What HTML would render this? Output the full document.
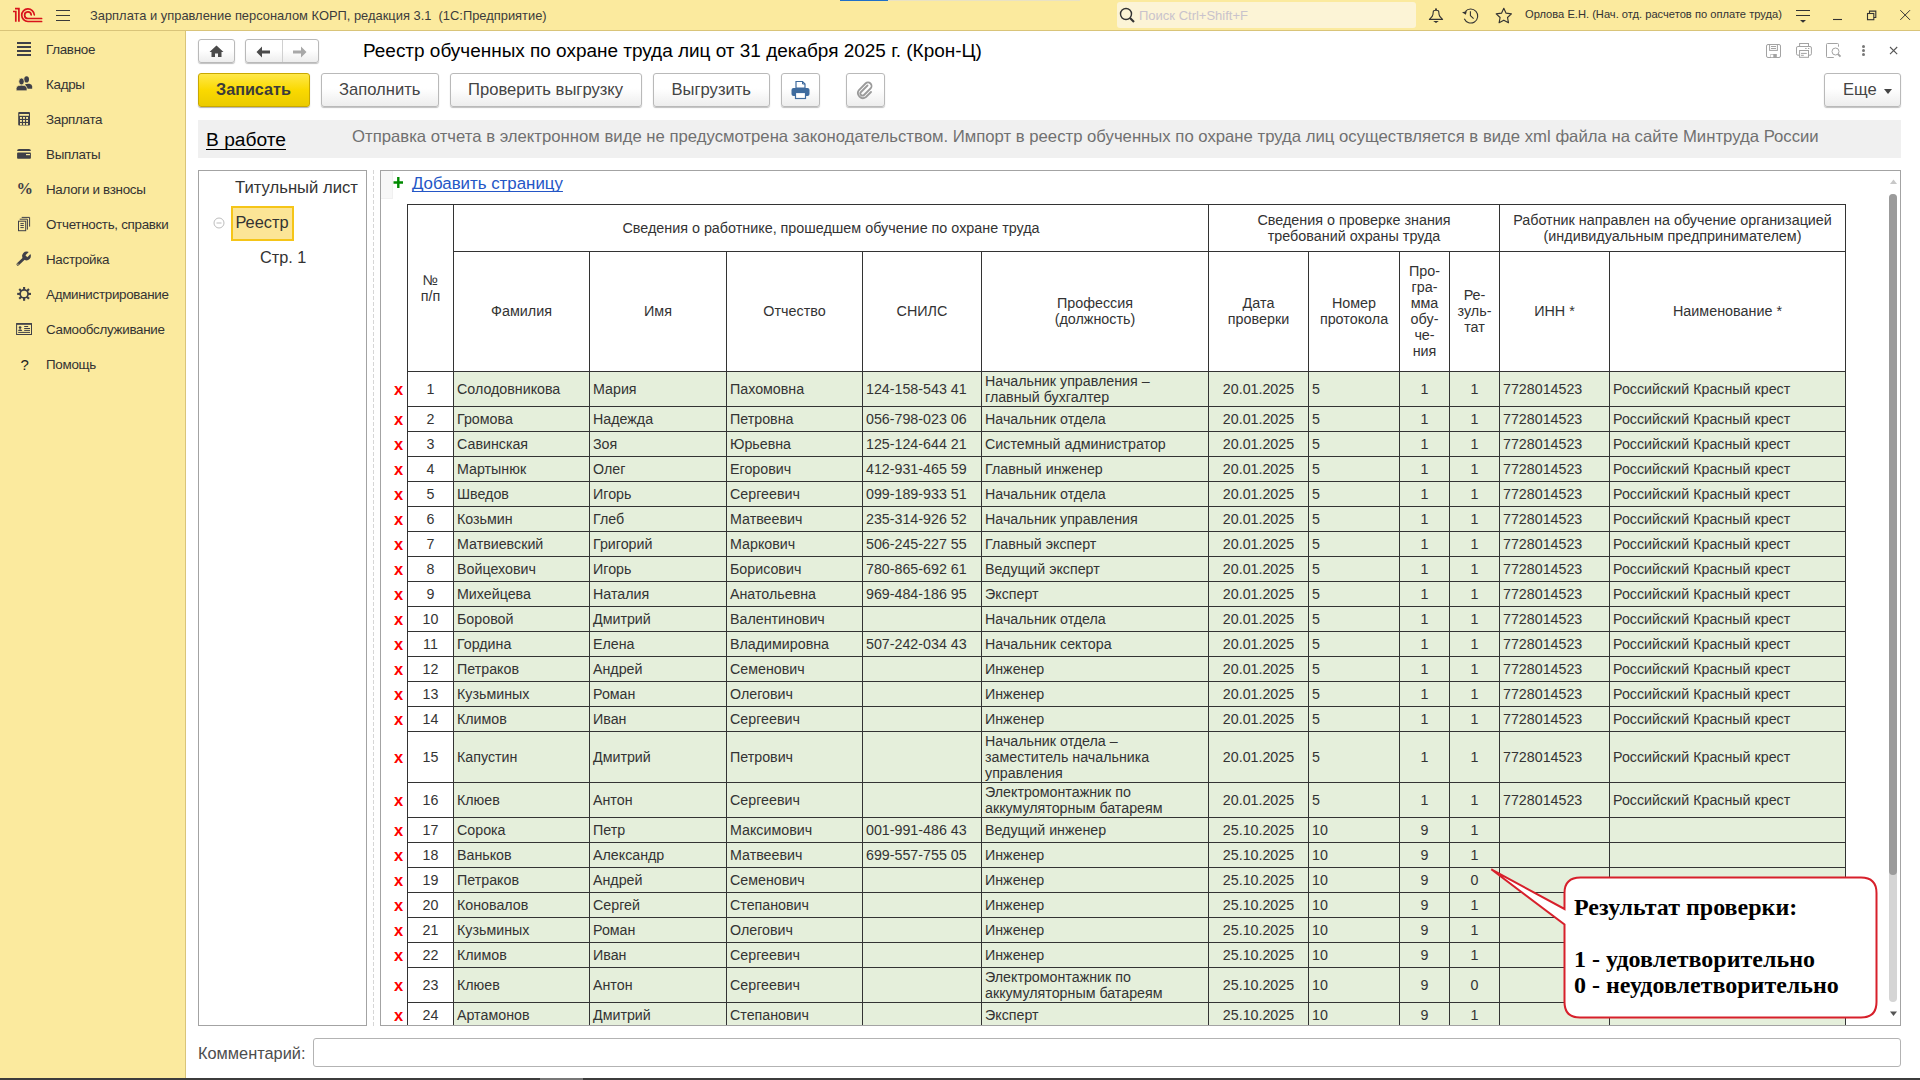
<!DOCTYPE html><html><head><meta charset="utf-8"><style>
html,body{margin:0;padding:0;}
body{width:1920px;height:1080px;overflow:hidden;position:relative;background:#fff;font-family:"Liberation Sans", sans-serif;}
.t{position:absolute;white-space:nowrap;line-height:1;}
.btn{position:absolute;box-sizing:border-box;border:1px solid #B9B9B9;border-radius:3px;background:linear-gradient(#FFFFFF,#FFFFFF 45%,#EDEDED);box-shadow:0 1px 1px rgba(0,0,0,0.25);}
.cell{position:absolute;box-sizing:border-box;display:flex;align-items:center;font-size:14px;color:#333;line-height:16px;white-space:nowrap;overflow:hidden;}
.hl{position:absolute;background:#333;}
</style></head><body>
<div style="position:absolute;left:0px;top:0px;width:1920px;height:30px;background:#FBEA9E;"></div>
<div style="position:absolute;left:0px;top:30px;width:1920px;height:1px;background:#D9C479;"></div>
<div style="position:absolute;left:840px;top:0px;width:48px;height:1px;background:#1E6FC8;"></div>
<div style="position:absolute;left:888px;top:0px;width:192px;height:1px;background:#E9E2C4;"></div>
<svg style="position:absolute;left:0;top:0" width="50" height="30" viewBox="0 0 50 30">
<g fill="none" stroke="#D8131B" stroke-width="1.7">
<path d="M13 11.5 H15.8 V21.8"/>
<path d="M15 8.7 H18.9 V21.8"/>
<path d="M34.3 14.8 A6.3 6.3 0 1 0 28 21.5 H41.6" stroke-linecap="round"/>
<path d="M31.2 14.8 A3.3 3.3 0 1 0 28 18.5 H41.6" stroke-linecap="round"/>
</g></svg>
<div style="position:absolute;left:56px;top:10px;width:14px;height:1.3px;background:#3A3A3A;"></div>
<div style="position:absolute;left:56px;top:15px;width:14px;height:1.3px;background:#3A3A3A;"></div>
<div style="position:absolute;left:56px;top:20px;width:14px;height:1.3px;background:#3A3A3A;"></div>
<div class="t" style="left:90px;top:9.5px;font-size:12.9px;color:#3C3C3C;font-weight:400;">Зарплата и управление персоналом КОРП, редакция 3.1&nbsp; (1С:Предприятие)</div>
<div style="position:absolute;left:1117px;top:2px;width:299px;height:26px;background:#FCF4D6;border-radius:3px;"></div>
<svg style="position:absolute;left:1119px;top:7px" width="18" height="18" viewBox="0 0 18 18">
<circle cx="7" cy="7" r="5.5" fill="none" stroke="#333" stroke-width="1.4"/>
<path d="M11 11 L15 15" stroke="#333" stroke-width="2.2"/></svg>
<div class="t" style="left:1139px;top:9px;font-size:13px;color:#C9C3CC;font-weight:400;">Поиск Ctrl+Shift+F</div>
<svg style="position:absolute;left:1420px;top:0" width="100" height="30" viewBox="1420 0 100 30">
<g fill="none" stroke="#333" stroke-width="1.1" stroke-linejoin="round">
<path d="M1433.3 11.5 Q1433.3 10.2 1436 10.2 Q1438.7 10.2 1438.7 11.5 L1439.1 14.6 Q1439.4 16.3 1441.4 18.2 L1442.6 19.4 H1429.4 L1430.6 18.2 Q1432.6 16.3 1432.9 14.6 Z"/>
<path d="M1465.3 11.6 A7 7 0 1 1 1464.3 18.8"/>
<path d="M1470.4 11.3 V15.6 L1473.6 18.7"/>
<path d="M1503.80 8.30 L1506.09 13.14 L1511.41 13.83 L1507.51 17.51 L1508.50 22.77 L1503.80 20.20 L1499.10 22.77 L1500.09 17.51 L1496.19 13.83 L1501.51 13.14Z" stroke-width="1.15"/>
</g>
<circle cx="1436" cy="9.2" r="1" fill="#333"/>
<path d="M1433.2 21.1 H1438.8 L1436 22.9Z" fill="#333"/>
<path d="M1462 12.3 L1466.8 11.3 L1465.8 14.8Z" fill="#333"/>
</svg>
<div class="t" style="left:1525px;top:9px;font-size:11.15px;color:#333;font-weight:400;">Орлова Е.Н. (Нач. отд. расчетов по оплате труда)</div>
<svg style="position:absolute;left:1790px;top:0" width="130" height="30" viewBox="1790 0 130 30">
<g fill="none" stroke="#333" stroke-width="1.1">
<path d="M1796 10.5 H1810 M1796 15.5 H1810"/>
<path d="M1833 19.5 H1842"/>
<rect x="1867.5" y="13.5" width="6.3" height="6.2"/>
<path d="M1869.5 13.5 V11.1 H1875.8 V17.5 H1873.8"/>
<path d="M1900.3 10.2 L1910 19.9 M1910 10.2 L1900.3 19.9" stroke-width="1"/>
</g>
<path d="M1800 20 H1806 L1803 22.8Z" fill="#333"/>
</svg>
<div style="position:absolute;left:0px;top:31px;width:185px;height:1047px;background:#FBEA9E;"></div>
<div style="position:absolute;left:185px;top:31px;width:1px;height:1047px;background:#D9C479;"></div>
<div class="t" style="left:46px;top:42.8px;font-size:13.4px;color:#333;font-weight:400;letter-spacing:-0.3px;">Главное</div>
<div class="t" style="left:46px;top:77.8px;font-size:13.4px;color:#333;font-weight:400;letter-spacing:-0.3px;">Кадры</div>
<div class="t" style="left:46px;top:112.8px;font-size:13.4px;color:#333;font-weight:400;letter-spacing:-0.3px;">Зарплата</div>
<div class="t" style="left:46px;top:147.8px;font-size:13.4px;color:#333;font-weight:400;letter-spacing:-0.3px;">Выплаты</div>
<div class="t" style="left:46px;top:182.8px;font-size:13.4px;color:#333;font-weight:400;letter-spacing:-0.3px;">Налоги и взносы</div>
<div class="t" style="left:46px;top:217.8px;font-size:13.4px;color:#333;font-weight:400;letter-spacing:-0.3px;">Отчетность, справки</div>
<div class="t" style="left:46px;top:252.8px;font-size:13.4px;color:#333;font-weight:400;letter-spacing:-0.3px;">Настройка</div>
<div class="t" style="left:46px;top:287.8px;font-size:13.4px;color:#333;font-weight:400;letter-spacing:-0.3px;">Администрирование</div>
<div class="t" style="left:46px;top:322.8px;font-size:13.4px;color:#333;font-weight:400;letter-spacing:-0.3px;">Самообслуживание</div>
<div class="t" style="left:46px;top:357.8px;font-size:13.4px;color:#333;font-weight:400;letter-spacing:-0.3px;">Помощь</div>
<svg style="position:absolute;left:0;top:30px" width="40" height="350" viewBox="0 30 40 350">
<g fill="#3F4048">
<rect x="17" y="42" width="14" height="2"/><rect x="17" y="46" width="14" height="2"/><rect x="17" y="50" width="14" height="2"/><rect x="17" y="54" width="14" height="2"/>
<ellipse cx="26.6" cy="79.4" rx="2.4" ry="3.1"/>
<path d="M25 84.3 Q27 83.6 29.5 83.8 Q32.2 84.3 32.2 86.5 V88.7 H27.5Z"/>
<ellipse cx="21.5" cy="81.5" rx="2.7" ry="3.4" stroke="#FBEA9E" stroke-width="0.7"/>
<path d="M16.2 88.3 Q16.2 86 18.5 85.6 L21.5 85.2 L24.5 85.6 Q27 86 27 88.3 V90.8 H16.2Z" stroke="#FBEA9E" stroke-width="0.7"/>
<rect x="18.2" y="112" width="11.8" height="13.6" rx="1"/>
<path d="M17.1 151 Q17.1 149 19 149 H29 Q30.9 149 30.9 151Z"/>
<rect x="17.1" y="152.6" width="13.8" height="6.2" rx="0.8"/>
<rect x="23.05" y="287.00" width="2.1" height="3" transform="rotate(0 24.1 293.9)"/><rect x="23.05" y="287.00" width="2.1" height="3" transform="rotate(45 24.1 293.9)"/><rect x="23.05" y="287.00" width="2.1" height="3" transform="rotate(90 24.1 293.9)"/><rect x="23.05" y="287.00" width="2.1" height="3" transform="rotate(135 24.1 293.9)"/><rect x="23.05" y="287.00" width="2.1" height="3" transform="rotate(180 24.1 293.9)"/><rect x="23.05" y="287.00" width="2.1" height="3" transform="rotate(225 24.1 293.9)"/><rect x="23.05" y="287.00" width="2.1" height="3" transform="rotate(270 24.1 293.9)"/><rect x="23.05" y="287.00" width="2.1" height="3" transform="rotate(315 24.1 293.9)"/>
<circle cx="24.1" cy="293.9" r="4.8"/>
<circle cx="26.5" cy="256" r="4.4"/><path d="M17.9 264.2 L24.2 258.2" stroke="#3F4048" stroke-width="2.8" stroke-linecap="round"/>
</g>
<g fill="#FBEA9E">
<rect x="19.3" y="114" width="9.6" height="1.8"/>
<rect x="20" y="117" width="1.9" height="1.9"/><rect x="23.05" y="117" width="1.9" height="1.9"/><rect x="26.1" y="117" width="1.9" height="1.9"/>
<rect x="20" y="120" width="1.9" height="1.9"/><rect x="23.05" y="120" width="1.9" height="1.9"/><rect x="26.1" y="120" width="1.9" height="1.9"/>
<rect x="20" y="123" width="1.9" height="1.9"/><rect x="23.05" y="123" width="1.9" height="1.9"/><rect x="26.1" y="123" width="1.9" height="1.9"/>
<rect x="26" y="154" width="4" height="1.2"/>
<circle cx="24.1" cy="293.9" r="3.1"/>
<circle cx="17.9" cy="264.2" r="0.6"/><rect x="25.2" y="249" width="2.7" height="7.2" transform="rotate(45 26.5 256)"/>
</g>
<g fill="none" stroke="#3F4048" stroke-width="1">
<path d="M21.7 217.4 H29.6 V226.6"/>
<path d="M19.7 219.2 H27.4 V229.6"/>
<rect x="18.5" y="221.2" width="7.2" height="9.5" fill="#FBEA9E"/>
<path d="M20.4 223.6 H23.8 M20.4 225.5 H23.8 M20.4 227.6 H23.8"/>
<rect x="16.6" y="323.6" width="14.9" height="10.9"/>
<path d="M16.6 324 H31.5" stroke-width="1.6"/>
<path d="M24.2 326.5 H28.2 M24.2 328.5 H30 M24.2 330.4 H30 M18.2 332.4 H30"/>
</g>
<circle cx="20.1" cy="327.6" r="1.3" fill="#3F4048"/>
<path d="M18 330.9 Q18.3 329.3 20.1 329.3 Q21.9 329.3 22.3 330.9Z" fill="#3F4048"/>
</svg>
<div class="t" style="left:16.5px;top:181px;font-family:'Liberation Serif',serif;font-size:16.5px;font-weight:700;color:#3F4048">%</div>
<div class="t" style="left:20.5px;top:356.5px;font-size:15px;color:#222;font-weight:400;">?</div>
<div class="btn" style="left:198px;top:39px;width:37px;height:24px;"></div>
<svg style="position:absolute;left:209px;top:44.8px" width="15" height="13" viewBox="0 0 15 13">
<path d="M7.5 0.5 L14.5 7 H12.5 V12 H9 V8.5 H6 V12 H2.5 V7 H0.5Z" fill="#4A4A4A"/></svg>
<div class="btn" style="left:245px;top:39px;width:74px;height:24px;"></div>
<div style="position:absolute;left:282px;top:40px;width:1px;height:22px;background:#D0D0D0;"></div>
<svg style="position:absolute;left:256px;top:45.8px" width="15" height="12" viewBox="0 0 15 12">
<path d="M0.5 6 L6 0.5 V4.5 H14 V7.5 H6 V11.5Z" fill="#4A4A4A"/></svg>
<svg style="position:absolute;left:292px;top:45.8px" width="15" height="12" viewBox="0 0 15 12">
<path d="M14.5 6 L9 0.5 V4.5 H1 V7.5 H9 V11.5Z" fill="#A8A8A8"/></svg>
<div class="t" style="left:363px;top:42px;font-size:18.97px;color:#000;font-weight:400;">Реестр обученных по охране труда лиц от 31 декабря 2025 г. (Крон-Ц)</div>
<svg style="position:absolute;left:1760px;top:40px" width="90" height="22" viewBox="1760 40 90 22">
<g fill="none" stroke="#A3A3A3" stroke-width="1">
<rect x="1766.5" y="44.5" width="14" height="13" rx="1.5"/>
<rect x="1769.6" y="44.5" width="7.8" height="5.9"/>
<path d="M1771 46.5 H1776 M1771 48.5 H1776"/>
<rect x="1799.6" y="43.5" width="8.9" height="3"/>
<path d="M1799.6 55.2 H1797.9 A1.4 1.4 0 0 1 1796.5 53.8 V48 A1.4 1.4 0 0 1 1797.9 46.5 H1810 A1.4 1.4 0 0 1 1811.4 48 V53.8 A1.4 1.4 0 0 1 1810 55.2 H1808.5"/>
<rect x="1799.6" y="50.5" width="8.9" height="6.8" fill="#fff"/>
<path d="M1801 53.4 H1806.8 M1801 55.3 H1803.8 M1805.2 48.5 H1806.6 M1808 48.5 H1809.3"/>
<path d="M1833.8 57.5 H1827.5 A1 1 0 0 1 1826.5 56.5 V44.5 A1 1 0 0 1 1827.5 43.5 H1837.5 A1 1 0 0 1 1838.5 44.5 V46.7"/>
<circle cx="1835.5" cy="51.5" r="3.5" fill="#fff"/>
<path d="M1838 54.1 L1840.5 56.6" stroke-width="2"/>
</g>
<rect x="1770.5" y="54" width="6.3" height="3.3" fill="#A3A3A3"/>
<rect x="1771" y="54.6" width="2.3" height="2.6" fill="#fff"/>
</svg>
<div style="position:absolute;left:1861.5px;top:44.6px;width:3.2px;height:3.2px;border-radius:50%;background:#777;"></div>
<div style="position:absolute;left:1861.5px;top:48.8px;width:3.2px;height:3.2px;border-radius:50%;background:#777;"></div>
<div style="position:absolute;left:1861.5px;top:53.0px;width:3.2px;height:3.2px;border-radius:50%;background:#777;"></div>
<svg style="position:absolute;left:1880px;top:40px" width="25" height="20" viewBox="1880 40 25 20">
<path d="M1890 47 L1897.2 54.2 M1897.2 47 L1890 54.2" stroke="#555" stroke-width="1.1"/></svg>
<div style="position:absolute;left:198px;top:73px;width:112px;height:34px;box-sizing:border-box;border:1px solid #C9A800;border-radius:3px;background:linear-gradient(#FFE84A,#FAD900 50%,#EBCB00);box-shadow:0 1px 1px rgba(0,0,0,0.3);"></div>
<div class="t" style="left:216px;top:81px;font-size:16.2px;color:#3B3B3B;font-weight:700;">Записать</div>
<div class="btn" style="left:321px;top:73px;width:118px;height:34px;"></div>
<div class="t" style="left:339px;top:82px;font-size:16.6px;color:#444;font-weight:400;">Заполнить</div>
<div class="btn" style="left:450px;top:73px;width:192px;height:34px;"></div>
<div class="t" style="left:468px;top:82px;font-size:16.6px;color:#444;font-weight:400;">Проверить выгрузку</div>
<div class="btn" style="left:653px;top:73px;width:117px;height:34px;"></div>
<div class="t" style="left:671.5px;top:82px;font-size:16.6px;color:#444;font-weight:400;">Выгрузить</div>
<div class="btn" style="left:781px;top:73px;width:39px;height:34px;"></div>
<div class="btn" style="left:846px;top:73px;width:39px;height:34px;"></div>
<svg style="position:absolute;left:790px;top:80px" width="21" height="21" viewBox="0 0 21 21">
<path d="M6 1.5 H12.5 L15 4 V8 H6Z" fill="#fff" stroke="#3F6B9E" stroke-width="1.2"/>
<path d="M12.5 1.5 V4 H15" fill="none" stroke="#3F6B9E" stroke-width="1"/>
<rect x="1.5" y="8" width="18" height="8" rx="2" fill="#3F6B9E"/>
<rect x="5.5" y="12.5" width="10" height="6" fill="#fff" stroke="#3F6B9E" stroke-width="1.2"/></svg>
<svg style="position:absolute;left:855px;top:80px" width="20" height="20" viewBox="0 0 20 20">
<path d="M12.5 5.5 L6 12 A2 2 0 0 0 9 15 L15.5 8.5 A3.5 3.5 0 0 0 10.5 3.5 L4 10 A5 5 0 0 0 11 17 L16 12" fill="none" stroke="#9A9A9A" stroke-width="1.8" stroke-linecap="round"/></svg>
<div class="btn" style="left:1824px;top:73px;width:77px;height:34px;"></div>
<div class="t" style="left:1843px;top:82px;font-size:16.6px;color:#444;font-weight:400;">Еще</div>
<svg style="position:absolute;left:1884px;top:89px" width="8" height="5" viewBox="0 0 8 5"><path d="M0 0 H8 L4 5Z" fill="#444"/></svg>
<div style="position:absolute;left:198px;top:120px;width:1703px;height:38px;background:#F0F0F0;"></div>
<div class="t" style="left:206px;top:129.5px;font-size:19.2px;color:#000;font-weight:400;"><span style="text-decoration:underline;text-underline-offset:3px;text-decoration-thickness:1px;text-decoration-skip-ink:none">В работе</span></div>
<div class="t" style="left:352px;top:129px;font-size:16.72px;color:#707070;font-weight:400;">Отправка отчета в электронном виде не предусмотрена законодательством. Импорт в реестр обученных по охране труда лиц осуществляется в виде xml файла на сайте Минтруда России</div>
<div style="position:absolute;left:198px;top:170px;width:169px;height:856px;box-sizing:border-box;border:1px solid #A3A3A3;background:#fff;"></div>
<div class="t" style="left:235px;top:180px;font-size:16.67px;color:#333;font-weight:400;">Титульный лист</div>
<div style="position:absolute;left:231px;top:206px;width:63px;height:35px;box-sizing:border-box;border:2px solid #F5C518;background:#FCE596;"></div>
<div class="t" style="left:235.4px;top:214px;font-size:16.4px;color:#333;font-weight:400;">Реестр</div>
<svg style="position:absolute;left:213px;top:217px" width="12" height="12" viewBox="0 0 12 12">
<circle cx="6" cy="6" r="5" fill="none" stroke="#BDBDBD" stroke-width="1"/><path d="M3.5 6 H8.5" stroke="#BDBDBD" stroke-width="1"/></svg>
<div class="t" style="left:260px;top:249px;font-size:16.3px;color:#333;font-weight:400;">Стр. 1</div>
<div style="position:absolute;left:373px;top:170px;width:1px;height:856px;background:repeating-linear-gradient(to bottom,#D6D6D6 0 4px,transparent 4px 6px);"></div>
<div style="position:absolute;left:380px;top:170px;width:1521px;height:856px;box-sizing:border-box;border:1px solid #A3A3A3;background:#fff;"></div>
<div style="position:absolute;left:381px;top:171px;width:11px;height:27px;background:#F7F7F7;border-right:1px solid #F0F0F0;border-bottom:1px solid #F0F0F0;"></div>
<svg style="position:absolute;left:393px;top:176px" width="11" height="13" viewBox="0 0 11 13">
<path d="M5.3 1 V12 M0.5 6.5 H10" stroke="#008A00" stroke-width="2.4"/></svg>
<div class="t" style="left:412px;top:176px;font-size:16.88px;color:#2456C6;font-weight:400;"><span style="text-decoration:underline;text-underline-offset:2px;text-decoration-skip-ink:none">Добавить страницу</span></div>
<svg style="position:absolute;left:1889px;top:178px" width="9" height="7" viewBox="0 0 9 7"><path d="M1 6 H8 L4.5 1.5Z" fill="#C8C8C8"/></svg>
<div style="position:absolute;left:1889px;top:194px;width:8px;height:808px;background:#D5D5D5;border-radius:4px;"></div>
<div style="position:absolute;left:1889px;top:194px;width:8px;height:681px;background:#9B9B9B;border-radius:4px;"></div>
<svg style="position:absolute;left:1889px;top:1010px" width="9" height="7" viewBox="0 0 9 7"><path d="M1 1.5 H8 L4.5 6Z" fill="#555"/></svg>
<div style="position:absolute;left:381px;top:171px;width:1506px;height:854px;overflow:hidden;">
<div class="cell" style="left:27px;top:34px;width:45px;height:166px;justify-content:center;text-align:center;padding-left:0px;padding-bottom:0px;font-size:14.35px;color:#333">№<br>п/п</div>
<div class="cell" style="left:73px;top:34px;width:754px;height:46px;justify-content:center;text-align:center;padding-left:0px;padding-bottom:0px;font-size:14.35px;color:#333">Сведения о работнике, прошедшем обучение по охране труда</div>
<div class="cell" style="left:828px;top:34px;width:290px;height:46px;justify-content:center;text-align:center;padding-left:0px;padding-bottom:0px;font-size:14.35px;color:#333">Сведения о проверке знания<br>требований охраны труда</div>
<div class="cell" style="left:1119px;top:34px;width:345px;height:46px;justify-content:center;text-align:center;padding-left:0px;padding-bottom:0px;font-size:14.35px;color:#333">Работник направлен на обучение организацией<br>(индивидуальным предпринимателем)</div>
<div class="cell" style="left:73px;top:81px;width:135px;height:119px;justify-content:center;text-align:center;padding-left:0px;padding-bottom:2px;font-size:14.35px;color:#333">Фамилия</div>
<div class="cell" style="left:209px;top:81px;width:136px;height:119px;justify-content:center;text-align:center;padding-left:0px;padding-bottom:2px;font-size:14.35px;color:#333">Имя</div>
<div class="cell" style="left:346px;top:81px;width:135px;height:119px;justify-content:center;text-align:center;padding-left:0px;padding-bottom:2px;font-size:14.35px;color:#333">Отчество</div>
<div class="cell" style="left:482px;top:81px;width:118px;height:119px;justify-content:center;text-align:center;padding-left:0px;padding-bottom:2px;font-size:14.35px;color:#333">СНИЛС</div>
<div class="cell" style="left:601px;top:81px;width:226px;height:119px;justify-content:center;text-align:center;padding-left:0px;padding-bottom:2px;font-size:14.35px;color:#333">Профессия<br>(должность)</div>
<div class="cell" style="left:828px;top:81px;width:99px;height:119px;justify-content:center;text-align:center;padding-left:0px;padding-bottom:2px;font-size:14.35px;color:#333">Дата<br>проверки</div>
<div class="cell" style="left:928px;top:81px;width:90px;height:119px;justify-content:center;text-align:center;padding-left:0px;padding-bottom:2px;font-size:14.35px;color:#333">Номер<br>протокола</div>
<div class="cell" style="left:1019px;top:81px;width:49px;height:119px;justify-content:center;text-align:center;padding-left:0px;padding-bottom:2px;font-size:14.35px;color:#333">Про-<br>гра-<br>мма<br>обу-<br>че-<br>ния</div>
<div class="cell" style="left:1069px;top:81px;width:49px;height:119px;justify-content:center;text-align:center;padding-left:0px;padding-bottom:2px;font-size:14.35px;color:#333">Ре-<br>зуль-<br>тат</div>
<div class="cell" style="left:1119px;top:81px;width:109px;height:119px;justify-content:center;text-align:center;padding-left:0px;padding-bottom:2px;font-size:14.35px;color:#333">ИНН *</div>
<div class="cell" style="left:1229px;top:81px;width:235px;height:119px;justify-content:center;text-align:center;padding-left:0px;padding-bottom:2px;font-size:14.35px;color:#333">Наименование *</div>
<div class="cell" style="left:27px;top:201px;width:45px;height:34px;justify-content:center;text-align:center;padding-left:0px;padding-bottom:0px;font-size:14.25px;color:#333">1</div>
<div class="cell" style="left:73px;top:201px;width:135px;height:34px;justify-content:flex-start;text-align:left;padding-left:3px;padding-bottom:0px;background:#E5EFDB;font-size:14.25px;color:#333">Солодовникова</div>
<div class="cell" style="left:209px;top:201px;width:136px;height:34px;justify-content:flex-start;text-align:left;padding-left:3px;padding-bottom:0px;background:#E5EFDB;font-size:14.25px;color:#333">Мария</div>
<div class="cell" style="left:346px;top:201px;width:135px;height:34px;justify-content:flex-start;text-align:left;padding-left:3px;padding-bottom:0px;background:#E5EFDB;font-size:14.25px;color:#333">Пахомовна</div>
<div class="cell" style="left:482px;top:201px;width:118px;height:34px;justify-content:flex-start;text-align:left;padding-left:3px;padding-bottom:0px;background:#E5EFDB;font-size:14.25px;color:#333">124-158-543 41</div>
<div class="cell" style="left:601px;top:201px;width:226px;height:34px;justify-content:flex-start;text-align:left;padding-left:3px;padding-bottom:0px;background:#E5EFDB;font-size:14.25px;color:#333">Начальник управления –<br>главный бухгалтер</div>
<div class="cell" style="left:828px;top:201px;width:99px;height:34px;justify-content:center;text-align:center;padding-left:0px;padding-bottom:0px;background:#E5EFDB;font-size:14.25px;color:#333">20.01.2025</div>
<div class="cell" style="left:928px;top:201px;width:90px;height:34px;justify-content:flex-start;text-align:left;padding-left:3px;padding-bottom:0px;background:#E5EFDB;font-size:14.25px;color:#333">5</div>
<div class="cell" style="left:1019px;top:201px;width:49px;height:34px;justify-content:center;text-align:center;padding-left:0px;padding-bottom:0px;background:#E5EFDB;font-size:14.25px;color:#333">1</div>
<div class="cell" style="left:1069px;top:201px;width:49px;height:34px;justify-content:center;text-align:center;padding-left:0px;padding-bottom:0px;background:#E5EFDB;font-size:14.25px;color:#333">1</div>
<div class="cell" style="left:1119px;top:201px;width:109px;height:34px;justify-content:flex-start;text-align:left;padding-left:3px;padding-bottom:0px;background:#E5EFDB;font-size:14.25px;color:#333">7728014523</div>
<div class="cell" style="left:1229px;top:201px;width:235px;height:34px;justify-content:flex-start;text-align:left;padding-left:3px;padding-bottom:0px;background:#E5EFDB;font-size:14.25px;color:#333">Российский Красный крест</div>
<div class="t" style="left:13px;top:210.0px;font-size:16.5px;font-weight:700;color:#FF0000;line-height:1">x</div>
<div class="cell" style="left:27px;top:236px;width:45px;height:24px;justify-content:center;text-align:center;padding-left:0px;padding-bottom:0px;font-size:14.25px;color:#333">2</div>
<div class="cell" style="left:73px;top:236px;width:135px;height:24px;justify-content:flex-start;text-align:left;padding-left:3px;padding-bottom:0px;background:#E5EFDB;font-size:14.25px;color:#333">Громова</div>
<div class="cell" style="left:209px;top:236px;width:136px;height:24px;justify-content:flex-start;text-align:left;padding-left:3px;padding-bottom:0px;background:#E5EFDB;font-size:14.25px;color:#333">Надежда</div>
<div class="cell" style="left:346px;top:236px;width:135px;height:24px;justify-content:flex-start;text-align:left;padding-left:3px;padding-bottom:0px;background:#E5EFDB;font-size:14.25px;color:#333">Петровна</div>
<div class="cell" style="left:482px;top:236px;width:118px;height:24px;justify-content:flex-start;text-align:left;padding-left:3px;padding-bottom:0px;background:#E5EFDB;font-size:14.25px;color:#333">056-798-023 06</div>
<div class="cell" style="left:601px;top:236px;width:226px;height:24px;justify-content:flex-start;text-align:left;padding-left:3px;padding-bottom:0px;background:#E5EFDB;font-size:14.25px;color:#333">Начальник отдела</div>
<div class="cell" style="left:828px;top:236px;width:99px;height:24px;justify-content:center;text-align:center;padding-left:0px;padding-bottom:0px;background:#E5EFDB;font-size:14.25px;color:#333">20.01.2025</div>
<div class="cell" style="left:928px;top:236px;width:90px;height:24px;justify-content:flex-start;text-align:left;padding-left:3px;padding-bottom:0px;background:#E5EFDB;font-size:14.25px;color:#333">5</div>
<div class="cell" style="left:1019px;top:236px;width:49px;height:24px;justify-content:center;text-align:center;padding-left:0px;padding-bottom:0px;background:#E5EFDB;font-size:14.25px;color:#333">1</div>
<div class="cell" style="left:1069px;top:236px;width:49px;height:24px;justify-content:center;text-align:center;padding-left:0px;padding-bottom:0px;background:#E5EFDB;font-size:14.25px;color:#333">1</div>
<div class="cell" style="left:1119px;top:236px;width:109px;height:24px;justify-content:flex-start;text-align:left;padding-left:3px;padding-bottom:0px;background:#E5EFDB;font-size:14.25px;color:#333">7728014523</div>
<div class="cell" style="left:1229px;top:236px;width:235px;height:24px;justify-content:flex-start;text-align:left;padding-left:3px;padding-bottom:0px;background:#E5EFDB;font-size:14.25px;color:#333">Российский Красный крест</div>
<div class="t" style="left:13px;top:240.0px;font-size:16.5px;font-weight:700;color:#FF0000;line-height:1">x</div>
<div class="cell" style="left:27px;top:261px;width:45px;height:24px;justify-content:center;text-align:center;padding-left:0px;padding-bottom:0px;font-size:14.25px;color:#333">3</div>
<div class="cell" style="left:73px;top:261px;width:135px;height:24px;justify-content:flex-start;text-align:left;padding-left:3px;padding-bottom:0px;background:#E5EFDB;font-size:14.25px;color:#333">Савинская</div>
<div class="cell" style="left:209px;top:261px;width:136px;height:24px;justify-content:flex-start;text-align:left;padding-left:3px;padding-bottom:0px;background:#E5EFDB;font-size:14.25px;color:#333">Зоя</div>
<div class="cell" style="left:346px;top:261px;width:135px;height:24px;justify-content:flex-start;text-align:left;padding-left:3px;padding-bottom:0px;background:#E5EFDB;font-size:14.25px;color:#333">Юрьевна</div>
<div class="cell" style="left:482px;top:261px;width:118px;height:24px;justify-content:flex-start;text-align:left;padding-left:3px;padding-bottom:0px;background:#E5EFDB;font-size:14.25px;color:#333">125-124-644 21</div>
<div class="cell" style="left:601px;top:261px;width:226px;height:24px;justify-content:flex-start;text-align:left;padding-left:3px;padding-bottom:0px;background:#E5EFDB;font-size:14.25px;color:#333">Системный администратор</div>
<div class="cell" style="left:828px;top:261px;width:99px;height:24px;justify-content:center;text-align:center;padding-left:0px;padding-bottom:0px;background:#E5EFDB;font-size:14.25px;color:#333">20.01.2025</div>
<div class="cell" style="left:928px;top:261px;width:90px;height:24px;justify-content:flex-start;text-align:left;padding-left:3px;padding-bottom:0px;background:#E5EFDB;font-size:14.25px;color:#333">5</div>
<div class="cell" style="left:1019px;top:261px;width:49px;height:24px;justify-content:center;text-align:center;padding-left:0px;padding-bottom:0px;background:#E5EFDB;font-size:14.25px;color:#333">1</div>
<div class="cell" style="left:1069px;top:261px;width:49px;height:24px;justify-content:center;text-align:center;padding-left:0px;padding-bottom:0px;background:#E5EFDB;font-size:14.25px;color:#333">1</div>
<div class="cell" style="left:1119px;top:261px;width:109px;height:24px;justify-content:flex-start;text-align:left;padding-left:3px;padding-bottom:0px;background:#E5EFDB;font-size:14.25px;color:#333">7728014523</div>
<div class="cell" style="left:1229px;top:261px;width:235px;height:24px;justify-content:flex-start;text-align:left;padding-left:3px;padding-bottom:0px;background:#E5EFDB;font-size:14.25px;color:#333">Российский Красный крест</div>
<div class="t" style="left:13px;top:265.0px;font-size:16.5px;font-weight:700;color:#FF0000;line-height:1">x</div>
<div class="cell" style="left:27px;top:286px;width:45px;height:24px;justify-content:center;text-align:center;padding-left:0px;padding-bottom:0px;font-size:14.25px;color:#333">4</div>
<div class="cell" style="left:73px;top:286px;width:135px;height:24px;justify-content:flex-start;text-align:left;padding-left:3px;padding-bottom:0px;background:#E5EFDB;font-size:14.25px;color:#333">Мартынюк</div>
<div class="cell" style="left:209px;top:286px;width:136px;height:24px;justify-content:flex-start;text-align:left;padding-left:3px;padding-bottom:0px;background:#E5EFDB;font-size:14.25px;color:#333">Олег</div>
<div class="cell" style="left:346px;top:286px;width:135px;height:24px;justify-content:flex-start;text-align:left;padding-left:3px;padding-bottom:0px;background:#E5EFDB;font-size:14.25px;color:#333">Егорович</div>
<div class="cell" style="left:482px;top:286px;width:118px;height:24px;justify-content:flex-start;text-align:left;padding-left:3px;padding-bottom:0px;background:#E5EFDB;font-size:14.25px;color:#333">412-931-465 59</div>
<div class="cell" style="left:601px;top:286px;width:226px;height:24px;justify-content:flex-start;text-align:left;padding-left:3px;padding-bottom:0px;background:#E5EFDB;font-size:14.25px;color:#333">Главный инженер</div>
<div class="cell" style="left:828px;top:286px;width:99px;height:24px;justify-content:center;text-align:center;padding-left:0px;padding-bottom:0px;background:#E5EFDB;font-size:14.25px;color:#333">20.01.2025</div>
<div class="cell" style="left:928px;top:286px;width:90px;height:24px;justify-content:flex-start;text-align:left;padding-left:3px;padding-bottom:0px;background:#E5EFDB;font-size:14.25px;color:#333">5</div>
<div class="cell" style="left:1019px;top:286px;width:49px;height:24px;justify-content:center;text-align:center;padding-left:0px;padding-bottom:0px;background:#E5EFDB;font-size:14.25px;color:#333">1</div>
<div class="cell" style="left:1069px;top:286px;width:49px;height:24px;justify-content:center;text-align:center;padding-left:0px;padding-bottom:0px;background:#E5EFDB;font-size:14.25px;color:#333">1</div>
<div class="cell" style="left:1119px;top:286px;width:109px;height:24px;justify-content:flex-start;text-align:left;padding-left:3px;padding-bottom:0px;background:#E5EFDB;font-size:14.25px;color:#333">7728014523</div>
<div class="cell" style="left:1229px;top:286px;width:235px;height:24px;justify-content:flex-start;text-align:left;padding-left:3px;padding-bottom:0px;background:#E5EFDB;font-size:14.25px;color:#333">Российский Красный крест</div>
<div class="t" style="left:13px;top:290.0px;font-size:16.5px;font-weight:700;color:#FF0000;line-height:1">x</div>
<div class="cell" style="left:27px;top:311px;width:45px;height:24px;justify-content:center;text-align:center;padding-left:0px;padding-bottom:0px;font-size:14.25px;color:#333">5</div>
<div class="cell" style="left:73px;top:311px;width:135px;height:24px;justify-content:flex-start;text-align:left;padding-left:3px;padding-bottom:0px;background:#E5EFDB;font-size:14.25px;color:#333">Шведов</div>
<div class="cell" style="left:209px;top:311px;width:136px;height:24px;justify-content:flex-start;text-align:left;padding-left:3px;padding-bottom:0px;background:#E5EFDB;font-size:14.25px;color:#333">Игорь</div>
<div class="cell" style="left:346px;top:311px;width:135px;height:24px;justify-content:flex-start;text-align:left;padding-left:3px;padding-bottom:0px;background:#E5EFDB;font-size:14.25px;color:#333">Сергеевич</div>
<div class="cell" style="left:482px;top:311px;width:118px;height:24px;justify-content:flex-start;text-align:left;padding-left:3px;padding-bottom:0px;background:#E5EFDB;font-size:14.25px;color:#333">099-189-933 51</div>
<div class="cell" style="left:601px;top:311px;width:226px;height:24px;justify-content:flex-start;text-align:left;padding-left:3px;padding-bottom:0px;background:#E5EFDB;font-size:14.25px;color:#333">Начальник отдела</div>
<div class="cell" style="left:828px;top:311px;width:99px;height:24px;justify-content:center;text-align:center;padding-left:0px;padding-bottom:0px;background:#E5EFDB;font-size:14.25px;color:#333">20.01.2025</div>
<div class="cell" style="left:928px;top:311px;width:90px;height:24px;justify-content:flex-start;text-align:left;padding-left:3px;padding-bottom:0px;background:#E5EFDB;font-size:14.25px;color:#333">5</div>
<div class="cell" style="left:1019px;top:311px;width:49px;height:24px;justify-content:center;text-align:center;padding-left:0px;padding-bottom:0px;background:#E5EFDB;font-size:14.25px;color:#333">1</div>
<div class="cell" style="left:1069px;top:311px;width:49px;height:24px;justify-content:center;text-align:center;padding-left:0px;padding-bottom:0px;background:#E5EFDB;font-size:14.25px;color:#333">1</div>
<div class="cell" style="left:1119px;top:311px;width:109px;height:24px;justify-content:flex-start;text-align:left;padding-left:3px;padding-bottom:0px;background:#E5EFDB;font-size:14.25px;color:#333">7728014523</div>
<div class="cell" style="left:1229px;top:311px;width:235px;height:24px;justify-content:flex-start;text-align:left;padding-left:3px;padding-bottom:0px;background:#E5EFDB;font-size:14.25px;color:#333">Российский Красный крест</div>
<div class="t" style="left:13px;top:315.0px;font-size:16.5px;font-weight:700;color:#FF0000;line-height:1">x</div>
<div class="cell" style="left:27px;top:336px;width:45px;height:24px;justify-content:center;text-align:center;padding-left:0px;padding-bottom:0px;font-size:14.25px;color:#333">6</div>
<div class="cell" style="left:73px;top:336px;width:135px;height:24px;justify-content:flex-start;text-align:left;padding-left:3px;padding-bottom:0px;background:#E5EFDB;font-size:14.25px;color:#333">Козьмин</div>
<div class="cell" style="left:209px;top:336px;width:136px;height:24px;justify-content:flex-start;text-align:left;padding-left:3px;padding-bottom:0px;background:#E5EFDB;font-size:14.25px;color:#333">Глеб</div>
<div class="cell" style="left:346px;top:336px;width:135px;height:24px;justify-content:flex-start;text-align:left;padding-left:3px;padding-bottom:0px;background:#E5EFDB;font-size:14.25px;color:#333">Матвеевич</div>
<div class="cell" style="left:482px;top:336px;width:118px;height:24px;justify-content:flex-start;text-align:left;padding-left:3px;padding-bottom:0px;background:#E5EFDB;font-size:14.25px;color:#333">235-314-926 52</div>
<div class="cell" style="left:601px;top:336px;width:226px;height:24px;justify-content:flex-start;text-align:left;padding-left:3px;padding-bottom:0px;background:#E5EFDB;font-size:14.25px;color:#333">Начальник управления</div>
<div class="cell" style="left:828px;top:336px;width:99px;height:24px;justify-content:center;text-align:center;padding-left:0px;padding-bottom:0px;background:#E5EFDB;font-size:14.25px;color:#333">20.01.2025</div>
<div class="cell" style="left:928px;top:336px;width:90px;height:24px;justify-content:flex-start;text-align:left;padding-left:3px;padding-bottom:0px;background:#E5EFDB;font-size:14.25px;color:#333">5</div>
<div class="cell" style="left:1019px;top:336px;width:49px;height:24px;justify-content:center;text-align:center;padding-left:0px;padding-bottom:0px;background:#E5EFDB;font-size:14.25px;color:#333">1</div>
<div class="cell" style="left:1069px;top:336px;width:49px;height:24px;justify-content:center;text-align:center;padding-left:0px;padding-bottom:0px;background:#E5EFDB;font-size:14.25px;color:#333">1</div>
<div class="cell" style="left:1119px;top:336px;width:109px;height:24px;justify-content:flex-start;text-align:left;padding-left:3px;padding-bottom:0px;background:#E5EFDB;font-size:14.25px;color:#333">7728014523</div>
<div class="cell" style="left:1229px;top:336px;width:235px;height:24px;justify-content:flex-start;text-align:left;padding-left:3px;padding-bottom:0px;background:#E5EFDB;font-size:14.25px;color:#333">Российский Красный крест</div>
<div class="t" style="left:13px;top:340.0px;font-size:16.5px;font-weight:700;color:#FF0000;line-height:1">x</div>
<div class="cell" style="left:27px;top:361px;width:45px;height:24px;justify-content:center;text-align:center;padding-left:0px;padding-bottom:0px;font-size:14.25px;color:#333">7</div>
<div class="cell" style="left:73px;top:361px;width:135px;height:24px;justify-content:flex-start;text-align:left;padding-left:3px;padding-bottom:0px;background:#E5EFDB;font-size:14.25px;color:#333">Матвиевский</div>
<div class="cell" style="left:209px;top:361px;width:136px;height:24px;justify-content:flex-start;text-align:left;padding-left:3px;padding-bottom:0px;background:#E5EFDB;font-size:14.25px;color:#333">Григорий</div>
<div class="cell" style="left:346px;top:361px;width:135px;height:24px;justify-content:flex-start;text-align:left;padding-left:3px;padding-bottom:0px;background:#E5EFDB;font-size:14.25px;color:#333">Маркович</div>
<div class="cell" style="left:482px;top:361px;width:118px;height:24px;justify-content:flex-start;text-align:left;padding-left:3px;padding-bottom:0px;background:#E5EFDB;font-size:14.25px;color:#333">506-245-227 55</div>
<div class="cell" style="left:601px;top:361px;width:226px;height:24px;justify-content:flex-start;text-align:left;padding-left:3px;padding-bottom:0px;background:#E5EFDB;font-size:14.25px;color:#333">Главный эксперт</div>
<div class="cell" style="left:828px;top:361px;width:99px;height:24px;justify-content:center;text-align:center;padding-left:0px;padding-bottom:0px;background:#E5EFDB;font-size:14.25px;color:#333">20.01.2025</div>
<div class="cell" style="left:928px;top:361px;width:90px;height:24px;justify-content:flex-start;text-align:left;padding-left:3px;padding-bottom:0px;background:#E5EFDB;font-size:14.25px;color:#333">5</div>
<div class="cell" style="left:1019px;top:361px;width:49px;height:24px;justify-content:center;text-align:center;padding-left:0px;padding-bottom:0px;background:#E5EFDB;font-size:14.25px;color:#333">1</div>
<div class="cell" style="left:1069px;top:361px;width:49px;height:24px;justify-content:center;text-align:center;padding-left:0px;padding-bottom:0px;background:#E5EFDB;font-size:14.25px;color:#333">1</div>
<div class="cell" style="left:1119px;top:361px;width:109px;height:24px;justify-content:flex-start;text-align:left;padding-left:3px;padding-bottom:0px;background:#E5EFDB;font-size:14.25px;color:#333">7728014523</div>
<div class="cell" style="left:1229px;top:361px;width:235px;height:24px;justify-content:flex-start;text-align:left;padding-left:3px;padding-bottom:0px;background:#E5EFDB;font-size:14.25px;color:#333">Российский Красный крест</div>
<div class="t" style="left:13px;top:365.0px;font-size:16.5px;font-weight:700;color:#FF0000;line-height:1">x</div>
<div class="cell" style="left:27px;top:386px;width:45px;height:24px;justify-content:center;text-align:center;padding-left:0px;padding-bottom:0px;font-size:14.25px;color:#333">8</div>
<div class="cell" style="left:73px;top:386px;width:135px;height:24px;justify-content:flex-start;text-align:left;padding-left:3px;padding-bottom:0px;background:#E5EFDB;font-size:14.25px;color:#333">Войцехович</div>
<div class="cell" style="left:209px;top:386px;width:136px;height:24px;justify-content:flex-start;text-align:left;padding-left:3px;padding-bottom:0px;background:#E5EFDB;font-size:14.25px;color:#333">Игорь</div>
<div class="cell" style="left:346px;top:386px;width:135px;height:24px;justify-content:flex-start;text-align:left;padding-left:3px;padding-bottom:0px;background:#E5EFDB;font-size:14.25px;color:#333">Борисович</div>
<div class="cell" style="left:482px;top:386px;width:118px;height:24px;justify-content:flex-start;text-align:left;padding-left:3px;padding-bottom:0px;background:#E5EFDB;font-size:14.25px;color:#333">780-865-692 61</div>
<div class="cell" style="left:601px;top:386px;width:226px;height:24px;justify-content:flex-start;text-align:left;padding-left:3px;padding-bottom:0px;background:#E5EFDB;font-size:14.25px;color:#333">Ведущий эксперт</div>
<div class="cell" style="left:828px;top:386px;width:99px;height:24px;justify-content:center;text-align:center;padding-left:0px;padding-bottom:0px;background:#E5EFDB;font-size:14.25px;color:#333">20.01.2025</div>
<div class="cell" style="left:928px;top:386px;width:90px;height:24px;justify-content:flex-start;text-align:left;padding-left:3px;padding-bottom:0px;background:#E5EFDB;font-size:14.25px;color:#333">5</div>
<div class="cell" style="left:1019px;top:386px;width:49px;height:24px;justify-content:center;text-align:center;padding-left:0px;padding-bottom:0px;background:#E5EFDB;font-size:14.25px;color:#333">1</div>
<div class="cell" style="left:1069px;top:386px;width:49px;height:24px;justify-content:center;text-align:center;padding-left:0px;padding-bottom:0px;background:#E5EFDB;font-size:14.25px;color:#333">1</div>
<div class="cell" style="left:1119px;top:386px;width:109px;height:24px;justify-content:flex-start;text-align:left;padding-left:3px;padding-bottom:0px;background:#E5EFDB;font-size:14.25px;color:#333">7728014523</div>
<div class="cell" style="left:1229px;top:386px;width:235px;height:24px;justify-content:flex-start;text-align:left;padding-left:3px;padding-bottom:0px;background:#E5EFDB;font-size:14.25px;color:#333">Российский Красный крест</div>
<div class="t" style="left:13px;top:390.0px;font-size:16.5px;font-weight:700;color:#FF0000;line-height:1">x</div>
<div class="cell" style="left:27px;top:411px;width:45px;height:24px;justify-content:center;text-align:center;padding-left:0px;padding-bottom:0px;font-size:14.25px;color:#333">9</div>
<div class="cell" style="left:73px;top:411px;width:135px;height:24px;justify-content:flex-start;text-align:left;padding-left:3px;padding-bottom:0px;background:#E5EFDB;font-size:14.25px;color:#333">Михейцева</div>
<div class="cell" style="left:209px;top:411px;width:136px;height:24px;justify-content:flex-start;text-align:left;padding-left:3px;padding-bottom:0px;background:#E5EFDB;font-size:14.25px;color:#333">Наталия</div>
<div class="cell" style="left:346px;top:411px;width:135px;height:24px;justify-content:flex-start;text-align:left;padding-left:3px;padding-bottom:0px;background:#E5EFDB;font-size:14.25px;color:#333">Анатольевна</div>
<div class="cell" style="left:482px;top:411px;width:118px;height:24px;justify-content:flex-start;text-align:left;padding-left:3px;padding-bottom:0px;background:#E5EFDB;font-size:14.25px;color:#333">969-484-186 95</div>
<div class="cell" style="left:601px;top:411px;width:226px;height:24px;justify-content:flex-start;text-align:left;padding-left:3px;padding-bottom:0px;background:#E5EFDB;font-size:14.25px;color:#333">Эксперт</div>
<div class="cell" style="left:828px;top:411px;width:99px;height:24px;justify-content:center;text-align:center;padding-left:0px;padding-bottom:0px;background:#E5EFDB;font-size:14.25px;color:#333">20.01.2025</div>
<div class="cell" style="left:928px;top:411px;width:90px;height:24px;justify-content:flex-start;text-align:left;padding-left:3px;padding-bottom:0px;background:#E5EFDB;font-size:14.25px;color:#333">5</div>
<div class="cell" style="left:1019px;top:411px;width:49px;height:24px;justify-content:center;text-align:center;padding-left:0px;padding-bottom:0px;background:#E5EFDB;font-size:14.25px;color:#333">1</div>
<div class="cell" style="left:1069px;top:411px;width:49px;height:24px;justify-content:center;text-align:center;padding-left:0px;padding-bottom:0px;background:#E5EFDB;font-size:14.25px;color:#333">1</div>
<div class="cell" style="left:1119px;top:411px;width:109px;height:24px;justify-content:flex-start;text-align:left;padding-left:3px;padding-bottom:0px;background:#E5EFDB;font-size:14.25px;color:#333">7728014523</div>
<div class="cell" style="left:1229px;top:411px;width:235px;height:24px;justify-content:flex-start;text-align:left;padding-left:3px;padding-bottom:0px;background:#E5EFDB;font-size:14.25px;color:#333">Российский Красный крест</div>
<div class="t" style="left:13px;top:415.0px;font-size:16.5px;font-weight:700;color:#FF0000;line-height:1">x</div>
<div class="cell" style="left:27px;top:436px;width:45px;height:24px;justify-content:center;text-align:center;padding-left:0px;padding-bottom:0px;font-size:14.25px;color:#333">10</div>
<div class="cell" style="left:73px;top:436px;width:135px;height:24px;justify-content:flex-start;text-align:left;padding-left:3px;padding-bottom:0px;background:#E5EFDB;font-size:14.25px;color:#333">Боровой</div>
<div class="cell" style="left:209px;top:436px;width:136px;height:24px;justify-content:flex-start;text-align:left;padding-left:3px;padding-bottom:0px;background:#E5EFDB;font-size:14.25px;color:#333">Дмитрий</div>
<div class="cell" style="left:346px;top:436px;width:135px;height:24px;justify-content:flex-start;text-align:left;padding-left:3px;padding-bottom:0px;background:#E5EFDB;font-size:14.25px;color:#333">Валентинович</div>
<div class="cell" style="left:482px;top:436px;width:118px;height:24px;justify-content:flex-start;text-align:left;padding-left:3px;padding-bottom:0px;background:#E5EFDB;font-size:14.25px;color:#333"></div>
<div class="cell" style="left:601px;top:436px;width:226px;height:24px;justify-content:flex-start;text-align:left;padding-left:3px;padding-bottom:0px;background:#E5EFDB;font-size:14.25px;color:#333">Начальник отдела</div>
<div class="cell" style="left:828px;top:436px;width:99px;height:24px;justify-content:center;text-align:center;padding-left:0px;padding-bottom:0px;background:#E5EFDB;font-size:14.25px;color:#333">20.01.2025</div>
<div class="cell" style="left:928px;top:436px;width:90px;height:24px;justify-content:flex-start;text-align:left;padding-left:3px;padding-bottom:0px;background:#E5EFDB;font-size:14.25px;color:#333">5</div>
<div class="cell" style="left:1019px;top:436px;width:49px;height:24px;justify-content:center;text-align:center;padding-left:0px;padding-bottom:0px;background:#E5EFDB;font-size:14.25px;color:#333">1</div>
<div class="cell" style="left:1069px;top:436px;width:49px;height:24px;justify-content:center;text-align:center;padding-left:0px;padding-bottom:0px;background:#E5EFDB;font-size:14.25px;color:#333">1</div>
<div class="cell" style="left:1119px;top:436px;width:109px;height:24px;justify-content:flex-start;text-align:left;padding-left:3px;padding-bottom:0px;background:#E5EFDB;font-size:14.25px;color:#333">7728014523</div>
<div class="cell" style="left:1229px;top:436px;width:235px;height:24px;justify-content:flex-start;text-align:left;padding-left:3px;padding-bottom:0px;background:#E5EFDB;font-size:14.25px;color:#333">Российский Красный крест</div>
<div class="t" style="left:13px;top:440.0px;font-size:16.5px;font-weight:700;color:#FF0000;line-height:1">x</div>
<div class="cell" style="left:27px;top:461px;width:45px;height:24px;justify-content:center;text-align:center;padding-left:0px;padding-bottom:0px;font-size:14.25px;color:#333">11</div>
<div class="cell" style="left:73px;top:461px;width:135px;height:24px;justify-content:flex-start;text-align:left;padding-left:3px;padding-bottom:0px;background:#E5EFDB;font-size:14.25px;color:#333">Гордина</div>
<div class="cell" style="left:209px;top:461px;width:136px;height:24px;justify-content:flex-start;text-align:left;padding-left:3px;padding-bottom:0px;background:#E5EFDB;font-size:14.25px;color:#333">Елена</div>
<div class="cell" style="left:346px;top:461px;width:135px;height:24px;justify-content:flex-start;text-align:left;padding-left:3px;padding-bottom:0px;background:#E5EFDB;font-size:14.25px;color:#333">Владимировна</div>
<div class="cell" style="left:482px;top:461px;width:118px;height:24px;justify-content:flex-start;text-align:left;padding-left:3px;padding-bottom:0px;background:#E5EFDB;font-size:14.25px;color:#333">507-242-034 43</div>
<div class="cell" style="left:601px;top:461px;width:226px;height:24px;justify-content:flex-start;text-align:left;padding-left:3px;padding-bottom:0px;background:#E5EFDB;font-size:14.25px;color:#333">Начальник сектора</div>
<div class="cell" style="left:828px;top:461px;width:99px;height:24px;justify-content:center;text-align:center;padding-left:0px;padding-bottom:0px;background:#E5EFDB;font-size:14.25px;color:#333">20.01.2025</div>
<div class="cell" style="left:928px;top:461px;width:90px;height:24px;justify-content:flex-start;text-align:left;padding-left:3px;padding-bottom:0px;background:#E5EFDB;font-size:14.25px;color:#333">5</div>
<div class="cell" style="left:1019px;top:461px;width:49px;height:24px;justify-content:center;text-align:center;padding-left:0px;padding-bottom:0px;background:#E5EFDB;font-size:14.25px;color:#333">1</div>
<div class="cell" style="left:1069px;top:461px;width:49px;height:24px;justify-content:center;text-align:center;padding-left:0px;padding-bottom:0px;background:#E5EFDB;font-size:14.25px;color:#333">1</div>
<div class="cell" style="left:1119px;top:461px;width:109px;height:24px;justify-content:flex-start;text-align:left;padding-left:3px;padding-bottom:0px;background:#E5EFDB;font-size:14.25px;color:#333">7728014523</div>
<div class="cell" style="left:1229px;top:461px;width:235px;height:24px;justify-content:flex-start;text-align:left;padding-left:3px;padding-bottom:0px;background:#E5EFDB;font-size:14.25px;color:#333">Российский Красный крест</div>
<div class="t" style="left:13px;top:465.0px;font-size:16.5px;font-weight:700;color:#FF0000;line-height:1">x</div>
<div class="cell" style="left:27px;top:486px;width:45px;height:24px;justify-content:center;text-align:center;padding-left:0px;padding-bottom:0px;font-size:14.25px;color:#333">12</div>
<div class="cell" style="left:73px;top:486px;width:135px;height:24px;justify-content:flex-start;text-align:left;padding-left:3px;padding-bottom:0px;background:#E5EFDB;font-size:14.25px;color:#333">Петраков</div>
<div class="cell" style="left:209px;top:486px;width:136px;height:24px;justify-content:flex-start;text-align:left;padding-left:3px;padding-bottom:0px;background:#E5EFDB;font-size:14.25px;color:#333">Андрей</div>
<div class="cell" style="left:346px;top:486px;width:135px;height:24px;justify-content:flex-start;text-align:left;padding-left:3px;padding-bottom:0px;background:#E5EFDB;font-size:14.25px;color:#333">Семенович</div>
<div class="cell" style="left:482px;top:486px;width:118px;height:24px;justify-content:flex-start;text-align:left;padding-left:3px;padding-bottom:0px;background:#E5EFDB;font-size:14.25px;color:#333"></div>
<div class="cell" style="left:601px;top:486px;width:226px;height:24px;justify-content:flex-start;text-align:left;padding-left:3px;padding-bottom:0px;background:#E5EFDB;font-size:14.25px;color:#333">Инженер</div>
<div class="cell" style="left:828px;top:486px;width:99px;height:24px;justify-content:center;text-align:center;padding-left:0px;padding-bottom:0px;background:#E5EFDB;font-size:14.25px;color:#333">20.01.2025</div>
<div class="cell" style="left:928px;top:486px;width:90px;height:24px;justify-content:flex-start;text-align:left;padding-left:3px;padding-bottom:0px;background:#E5EFDB;font-size:14.25px;color:#333">5</div>
<div class="cell" style="left:1019px;top:486px;width:49px;height:24px;justify-content:center;text-align:center;padding-left:0px;padding-bottom:0px;background:#E5EFDB;font-size:14.25px;color:#333">1</div>
<div class="cell" style="left:1069px;top:486px;width:49px;height:24px;justify-content:center;text-align:center;padding-left:0px;padding-bottom:0px;background:#E5EFDB;font-size:14.25px;color:#333">1</div>
<div class="cell" style="left:1119px;top:486px;width:109px;height:24px;justify-content:flex-start;text-align:left;padding-left:3px;padding-bottom:0px;background:#E5EFDB;font-size:14.25px;color:#333">7728014523</div>
<div class="cell" style="left:1229px;top:486px;width:235px;height:24px;justify-content:flex-start;text-align:left;padding-left:3px;padding-bottom:0px;background:#E5EFDB;font-size:14.25px;color:#333">Российский Красный крест</div>
<div class="t" style="left:13px;top:490.0px;font-size:16.5px;font-weight:700;color:#FF0000;line-height:1">x</div>
<div class="cell" style="left:27px;top:511px;width:45px;height:24px;justify-content:center;text-align:center;padding-left:0px;padding-bottom:0px;font-size:14.25px;color:#333">13</div>
<div class="cell" style="left:73px;top:511px;width:135px;height:24px;justify-content:flex-start;text-align:left;padding-left:3px;padding-bottom:0px;background:#E5EFDB;font-size:14.25px;color:#333">Кузьминых</div>
<div class="cell" style="left:209px;top:511px;width:136px;height:24px;justify-content:flex-start;text-align:left;padding-left:3px;padding-bottom:0px;background:#E5EFDB;font-size:14.25px;color:#333">Роман</div>
<div class="cell" style="left:346px;top:511px;width:135px;height:24px;justify-content:flex-start;text-align:left;padding-left:3px;padding-bottom:0px;background:#E5EFDB;font-size:14.25px;color:#333">Олегович</div>
<div class="cell" style="left:482px;top:511px;width:118px;height:24px;justify-content:flex-start;text-align:left;padding-left:3px;padding-bottom:0px;background:#E5EFDB;font-size:14.25px;color:#333"></div>
<div class="cell" style="left:601px;top:511px;width:226px;height:24px;justify-content:flex-start;text-align:left;padding-left:3px;padding-bottom:0px;background:#E5EFDB;font-size:14.25px;color:#333">Инженер</div>
<div class="cell" style="left:828px;top:511px;width:99px;height:24px;justify-content:center;text-align:center;padding-left:0px;padding-bottom:0px;background:#E5EFDB;font-size:14.25px;color:#333">20.01.2025</div>
<div class="cell" style="left:928px;top:511px;width:90px;height:24px;justify-content:flex-start;text-align:left;padding-left:3px;padding-bottom:0px;background:#E5EFDB;font-size:14.25px;color:#333">5</div>
<div class="cell" style="left:1019px;top:511px;width:49px;height:24px;justify-content:center;text-align:center;padding-left:0px;padding-bottom:0px;background:#E5EFDB;font-size:14.25px;color:#333">1</div>
<div class="cell" style="left:1069px;top:511px;width:49px;height:24px;justify-content:center;text-align:center;padding-left:0px;padding-bottom:0px;background:#E5EFDB;font-size:14.25px;color:#333">1</div>
<div class="cell" style="left:1119px;top:511px;width:109px;height:24px;justify-content:flex-start;text-align:left;padding-left:3px;padding-bottom:0px;background:#E5EFDB;font-size:14.25px;color:#333">7728014523</div>
<div class="cell" style="left:1229px;top:511px;width:235px;height:24px;justify-content:flex-start;text-align:left;padding-left:3px;padding-bottom:0px;background:#E5EFDB;font-size:14.25px;color:#333">Российский Красный крест</div>
<div class="t" style="left:13px;top:515.0px;font-size:16.5px;font-weight:700;color:#FF0000;line-height:1">x</div>
<div class="cell" style="left:27px;top:536px;width:45px;height:24px;justify-content:center;text-align:center;padding-left:0px;padding-bottom:0px;font-size:14.25px;color:#333">14</div>
<div class="cell" style="left:73px;top:536px;width:135px;height:24px;justify-content:flex-start;text-align:left;padding-left:3px;padding-bottom:0px;background:#E5EFDB;font-size:14.25px;color:#333">Климов</div>
<div class="cell" style="left:209px;top:536px;width:136px;height:24px;justify-content:flex-start;text-align:left;padding-left:3px;padding-bottom:0px;background:#E5EFDB;font-size:14.25px;color:#333">Иван</div>
<div class="cell" style="left:346px;top:536px;width:135px;height:24px;justify-content:flex-start;text-align:left;padding-left:3px;padding-bottom:0px;background:#E5EFDB;font-size:14.25px;color:#333">Сергеевич</div>
<div class="cell" style="left:482px;top:536px;width:118px;height:24px;justify-content:flex-start;text-align:left;padding-left:3px;padding-bottom:0px;background:#E5EFDB;font-size:14.25px;color:#333"></div>
<div class="cell" style="left:601px;top:536px;width:226px;height:24px;justify-content:flex-start;text-align:left;padding-left:3px;padding-bottom:0px;background:#E5EFDB;font-size:14.25px;color:#333">Инженер</div>
<div class="cell" style="left:828px;top:536px;width:99px;height:24px;justify-content:center;text-align:center;padding-left:0px;padding-bottom:0px;background:#E5EFDB;font-size:14.25px;color:#333">20.01.2025</div>
<div class="cell" style="left:928px;top:536px;width:90px;height:24px;justify-content:flex-start;text-align:left;padding-left:3px;padding-bottom:0px;background:#E5EFDB;font-size:14.25px;color:#333">5</div>
<div class="cell" style="left:1019px;top:536px;width:49px;height:24px;justify-content:center;text-align:center;padding-left:0px;padding-bottom:0px;background:#E5EFDB;font-size:14.25px;color:#333">1</div>
<div class="cell" style="left:1069px;top:536px;width:49px;height:24px;justify-content:center;text-align:center;padding-left:0px;padding-bottom:0px;background:#E5EFDB;font-size:14.25px;color:#333">1</div>
<div class="cell" style="left:1119px;top:536px;width:109px;height:24px;justify-content:flex-start;text-align:left;padding-left:3px;padding-bottom:0px;background:#E5EFDB;font-size:14.25px;color:#333">7728014523</div>
<div class="cell" style="left:1229px;top:536px;width:235px;height:24px;justify-content:flex-start;text-align:left;padding-left:3px;padding-bottom:0px;background:#E5EFDB;font-size:14.25px;color:#333">Российский Красный крест</div>
<div class="t" style="left:13px;top:540.0px;font-size:16.5px;font-weight:700;color:#FF0000;line-height:1">x</div>
<div class="cell" style="left:27px;top:561px;width:45px;height:50px;justify-content:center;text-align:center;padding-left:0px;padding-bottom:0px;font-size:14.25px;color:#333">15</div>
<div class="cell" style="left:73px;top:561px;width:135px;height:50px;justify-content:flex-start;text-align:left;padding-left:3px;padding-bottom:0px;background:#E5EFDB;font-size:14.25px;color:#333">Капустин</div>
<div class="cell" style="left:209px;top:561px;width:136px;height:50px;justify-content:flex-start;text-align:left;padding-left:3px;padding-bottom:0px;background:#E5EFDB;font-size:14.25px;color:#333">Дмитрий</div>
<div class="cell" style="left:346px;top:561px;width:135px;height:50px;justify-content:flex-start;text-align:left;padding-left:3px;padding-bottom:0px;background:#E5EFDB;font-size:14.25px;color:#333">Петрович</div>
<div class="cell" style="left:482px;top:561px;width:118px;height:50px;justify-content:flex-start;text-align:left;padding-left:3px;padding-bottom:0px;background:#E5EFDB;font-size:14.25px;color:#333"></div>
<div class="cell" style="left:601px;top:561px;width:226px;height:50px;justify-content:flex-start;text-align:left;padding-left:3px;padding-bottom:0px;background:#E5EFDB;font-size:14.25px;color:#333">Начальник отдела –<br>заместитель начальника<br>управления</div>
<div class="cell" style="left:828px;top:561px;width:99px;height:50px;justify-content:center;text-align:center;padding-left:0px;padding-bottom:0px;background:#E5EFDB;font-size:14.25px;color:#333">20.01.2025</div>
<div class="cell" style="left:928px;top:561px;width:90px;height:50px;justify-content:flex-start;text-align:left;padding-left:3px;padding-bottom:0px;background:#E5EFDB;font-size:14.25px;color:#333">5</div>
<div class="cell" style="left:1019px;top:561px;width:49px;height:50px;justify-content:center;text-align:center;padding-left:0px;padding-bottom:0px;background:#E5EFDB;font-size:14.25px;color:#333">1</div>
<div class="cell" style="left:1069px;top:561px;width:49px;height:50px;justify-content:center;text-align:center;padding-left:0px;padding-bottom:0px;background:#E5EFDB;font-size:14.25px;color:#333">1</div>
<div class="cell" style="left:1119px;top:561px;width:109px;height:50px;justify-content:flex-start;text-align:left;padding-left:3px;padding-bottom:0px;background:#E5EFDB;font-size:14.25px;color:#333">7728014523</div>
<div class="cell" style="left:1229px;top:561px;width:235px;height:50px;justify-content:flex-start;text-align:left;padding-left:3px;padding-bottom:0px;background:#E5EFDB;font-size:14.25px;color:#333">Российский Красный крест</div>
<div class="t" style="left:13px;top:578.0px;font-size:16.5px;font-weight:700;color:#FF0000;line-height:1">x</div>
<div class="cell" style="left:27px;top:612px;width:45px;height:34px;justify-content:center;text-align:center;padding-left:0px;padding-bottom:0px;font-size:14.25px;color:#333">16</div>
<div class="cell" style="left:73px;top:612px;width:135px;height:34px;justify-content:flex-start;text-align:left;padding-left:3px;padding-bottom:0px;background:#E5EFDB;font-size:14.25px;color:#333">Клюев</div>
<div class="cell" style="left:209px;top:612px;width:136px;height:34px;justify-content:flex-start;text-align:left;padding-left:3px;padding-bottom:0px;background:#E5EFDB;font-size:14.25px;color:#333">Антон</div>
<div class="cell" style="left:346px;top:612px;width:135px;height:34px;justify-content:flex-start;text-align:left;padding-left:3px;padding-bottom:0px;background:#E5EFDB;font-size:14.25px;color:#333">Сергеевич</div>
<div class="cell" style="left:482px;top:612px;width:118px;height:34px;justify-content:flex-start;text-align:left;padding-left:3px;padding-bottom:0px;background:#E5EFDB;font-size:14.25px;color:#333"></div>
<div class="cell" style="left:601px;top:612px;width:226px;height:34px;justify-content:flex-start;text-align:left;padding-left:3px;padding-bottom:0px;background:#E5EFDB;font-size:14.25px;color:#333">Электромонтажник по<br>аккумуляторным батареям</div>
<div class="cell" style="left:828px;top:612px;width:99px;height:34px;justify-content:center;text-align:center;padding-left:0px;padding-bottom:0px;background:#E5EFDB;font-size:14.25px;color:#333">20.01.2025</div>
<div class="cell" style="left:928px;top:612px;width:90px;height:34px;justify-content:flex-start;text-align:left;padding-left:3px;padding-bottom:0px;background:#E5EFDB;font-size:14.25px;color:#333">5</div>
<div class="cell" style="left:1019px;top:612px;width:49px;height:34px;justify-content:center;text-align:center;padding-left:0px;padding-bottom:0px;background:#E5EFDB;font-size:14.25px;color:#333">1</div>
<div class="cell" style="left:1069px;top:612px;width:49px;height:34px;justify-content:center;text-align:center;padding-left:0px;padding-bottom:0px;background:#E5EFDB;font-size:14.25px;color:#333">1</div>
<div class="cell" style="left:1119px;top:612px;width:109px;height:34px;justify-content:flex-start;text-align:left;padding-left:3px;padding-bottom:0px;background:#E5EFDB;font-size:14.25px;color:#333">7728014523</div>
<div class="cell" style="left:1229px;top:612px;width:235px;height:34px;justify-content:flex-start;text-align:left;padding-left:3px;padding-bottom:0px;background:#E5EFDB;font-size:14.25px;color:#333">Российский Красный крест</div>
<div class="t" style="left:13px;top:621.0px;font-size:16.5px;font-weight:700;color:#FF0000;line-height:1">x</div>
<div class="cell" style="left:27px;top:647px;width:45px;height:24px;justify-content:center;text-align:center;padding-left:0px;padding-bottom:0px;font-size:14.25px;color:#333">17</div>
<div class="cell" style="left:73px;top:647px;width:135px;height:24px;justify-content:flex-start;text-align:left;padding-left:3px;padding-bottom:0px;background:#E5EFDB;font-size:14.25px;color:#333">Сорока</div>
<div class="cell" style="left:209px;top:647px;width:136px;height:24px;justify-content:flex-start;text-align:left;padding-left:3px;padding-bottom:0px;background:#E5EFDB;font-size:14.25px;color:#333">Петр</div>
<div class="cell" style="left:346px;top:647px;width:135px;height:24px;justify-content:flex-start;text-align:left;padding-left:3px;padding-bottom:0px;background:#E5EFDB;font-size:14.25px;color:#333">Максимович</div>
<div class="cell" style="left:482px;top:647px;width:118px;height:24px;justify-content:flex-start;text-align:left;padding-left:3px;padding-bottom:0px;background:#E5EFDB;font-size:14.25px;color:#333">001-991-486 43</div>
<div class="cell" style="left:601px;top:647px;width:226px;height:24px;justify-content:flex-start;text-align:left;padding-left:3px;padding-bottom:0px;background:#E5EFDB;font-size:14.25px;color:#333">Ведущий инженер</div>
<div class="cell" style="left:828px;top:647px;width:99px;height:24px;justify-content:center;text-align:center;padding-left:0px;padding-bottom:0px;background:#E5EFDB;font-size:14.25px;color:#333">25.10.2025</div>
<div class="cell" style="left:928px;top:647px;width:90px;height:24px;justify-content:flex-start;text-align:left;padding-left:3px;padding-bottom:0px;background:#E5EFDB;font-size:14.25px;color:#333">10</div>
<div class="cell" style="left:1019px;top:647px;width:49px;height:24px;justify-content:center;text-align:center;padding-left:0px;padding-bottom:0px;background:#E5EFDB;font-size:14.25px;color:#333">9</div>
<div class="cell" style="left:1069px;top:647px;width:49px;height:24px;justify-content:center;text-align:center;padding-left:0px;padding-bottom:0px;background:#E5EFDB;font-size:14.25px;color:#333">1</div>
<div class="cell" style="left:1119px;top:647px;width:109px;height:24px;justify-content:flex-start;text-align:left;padding-left:3px;padding-bottom:0px;background:#E5EFDB;font-size:14.25px;color:#333"></div>
<div class="cell" style="left:1229px;top:647px;width:235px;height:24px;justify-content:flex-start;text-align:left;padding-left:3px;padding-bottom:0px;background:#E5EFDB;font-size:14.25px;color:#333"></div>
<div class="t" style="left:13px;top:651.0px;font-size:16.5px;font-weight:700;color:#FF0000;line-height:1">x</div>
<div class="cell" style="left:27px;top:672px;width:45px;height:24px;justify-content:center;text-align:center;padding-left:0px;padding-bottom:0px;font-size:14.25px;color:#333">18</div>
<div class="cell" style="left:73px;top:672px;width:135px;height:24px;justify-content:flex-start;text-align:left;padding-left:3px;padding-bottom:0px;background:#E5EFDB;font-size:14.25px;color:#333">Ваньков</div>
<div class="cell" style="left:209px;top:672px;width:136px;height:24px;justify-content:flex-start;text-align:left;padding-left:3px;padding-bottom:0px;background:#E5EFDB;font-size:14.25px;color:#333">Александр</div>
<div class="cell" style="left:346px;top:672px;width:135px;height:24px;justify-content:flex-start;text-align:left;padding-left:3px;padding-bottom:0px;background:#E5EFDB;font-size:14.25px;color:#333">Матвеевич</div>
<div class="cell" style="left:482px;top:672px;width:118px;height:24px;justify-content:flex-start;text-align:left;padding-left:3px;padding-bottom:0px;background:#E5EFDB;font-size:14.25px;color:#333">699-557-755 05</div>
<div class="cell" style="left:601px;top:672px;width:226px;height:24px;justify-content:flex-start;text-align:left;padding-left:3px;padding-bottom:0px;background:#E5EFDB;font-size:14.25px;color:#333">Инженер</div>
<div class="cell" style="left:828px;top:672px;width:99px;height:24px;justify-content:center;text-align:center;padding-left:0px;padding-bottom:0px;background:#E5EFDB;font-size:14.25px;color:#333">25.10.2025</div>
<div class="cell" style="left:928px;top:672px;width:90px;height:24px;justify-content:flex-start;text-align:left;padding-left:3px;padding-bottom:0px;background:#E5EFDB;font-size:14.25px;color:#333">10</div>
<div class="cell" style="left:1019px;top:672px;width:49px;height:24px;justify-content:center;text-align:center;padding-left:0px;padding-bottom:0px;background:#E5EFDB;font-size:14.25px;color:#333">9</div>
<div class="cell" style="left:1069px;top:672px;width:49px;height:24px;justify-content:center;text-align:center;padding-left:0px;padding-bottom:0px;background:#E5EFDB;font-size:14.25px;color:#333">1</div>
<div class="cell" style="left:1119px;top:672px;width:109px;height:24px;justify-content:flex-start;text-align:left;padding-left:3px;padding-bottom:0px;background:#E5EFDB;font-size:14.25px;color:#333"></div>
<div class="cell" style="left:1229px;top:672px;width:235px;height:24px;justify-content:flex-start;text-align:left;padding-left:3px;padding-bottom:0px;background:#E5EFDB;font-size:14.25px;color:#333"></div>
<div class="t" style="left:13px;top:676.0px;font-size:16.5px;font-weight:700;color:#FF0000;line-height:1">x</div>
<div class="cell" style="left:27px;top:697px;width:45px;height:24px;justify-content:center;text-align:center;padding-left:0px;padding-bottom:0px;font-size:14.25px;color:#333">19</div>
<div class="cell" style="left:73px;top:697px;width:135px;height:24px;justify-content:flex-start;text-align:left;padding-left:3px;padding-bottom:0px;background:#E5EFDB;font-size:14.25px;color:#333">Петраков</div>
<div class="cell" style="left:209px;top:697px;width:136px;height:24px;justify-content:flex-start;text-align:left;padding-left:3px;padding-bottom:0px;background:#E5EFDB;font-size:14.25px;color:#333">Андрей</div>
<div class="cell" style="left:346px;top:697px;width:135px;height:24px;justify-content:flex-start;text-align:left;padding-left:3px;padding-bottom:0px;background:#E5EFDB;font-size:14.25px;color:#333">Семенович</div>
<div class="cell" style="left:482px;top:697px;width:118px;height:24px;justify-content:flex-start;text-align:left;padding-left:3px;padding-bottom:0px;background:#E5EFDB;font-size:14.25px;color:#333"></div>
<div class="cell" style="left:601px;top:697px;width:226px;height:24px;justify-content:flex-start;text-align:left;padding-left:3px;padding-bottom:0px;background:#E5EFDB;font-size:14.25px;color:#333">Инженер</div>
<div class="cell" style="left:828px;top:697px;width:99px;height:24px;justify-content:center;text-align:center;padding-left:0px;padding-bottom:0px;background:#E5EFDB;font-size:14.25px;color:#333">25.10.2025</div>
<div class="cell" style="left:928px;top:697px;width:90px;height:24px;justify-content:flex-start;text-align:left;padding-left:3px;padding-bottom:0px;background:#E5EFDB;font-size:14.25px;color:#333">10</div>
<div class="cell" style="left:1019px;top:697px;width:49px;height:24px;justify-content:center;text-align:center;padding-left:0px;padding-bottom:0px;background:#E5EFDB;font-size:14.25px;color:#333">9</div>
<div class="cell" style="left:1069px;top:697px;width:49px;height:24px;justify-content:center;text-align:center;padding-left:0px;padding-bottom:0px;background:#E5EFDB;font-size:14.25px;color:#333">0</div>
<div class="cell" style="left:1119px;top:697px;width:109px;height:24px;justify-content:flex-start;text-align:left;padding-left:3px;padding-bottom:0px;background:#E5EFDB;font-size:14.25px;color:#333"></div>
<div class="cell" style="left:1229px;top:697px;width:235px;height:24px;justify-content:flex-start;text-align:left;padding-left:3px;padding-bottom:0px;background:#E5EFDB;font-size:14.25px;color:#333"></div>
<div class="t" style="left:13px;top:701.0px;font-size:16.5px;font-weight:700;color:#FF0000;line-height:1">x</div>
<div class="cell" style="left:27px;top:722px;width:45px;height:24px;justify-content:center;text-align:center;padding-left:0px;padding-bottom:0px;font-size:14.25px;color:#333">20</div>
<div class="cell" style="left:73px;top:722px;width:135px;height:24px;justify-content:flex-start;text-align:left;padding-left:3px;padding-bottom:0px;background:#E5EFDB;font-size:14.25px;color:#333">Коновалов</div>
<div class="cell" style="left:209px;top:722px;width:136px;height:24px;justify-content:flex-start;text-align:left;padding-left:3px;padding-bottom:0px;background:#E5EFDB;font-size:14.25px;color:#333">Сергей</div>
<div class="cell" style="left:346px;top:722px;width:135px;height:24px;justify-content:flex-start;text-align:left;padding-left:3px;padding-bottom:0px;background:#E5EFDB;font-size:14.25px;color:#333">Степанович</div>
<div class="cell" style="left:482px;top:722px;width:118px;height:24px;justify-content:flex-start;text-align:left;padding-left:3px;padding-bottom:0px;background:#E5EFDB;font-size:14.25px;color:#333"></div>
<div class="cell" style="left:601px;top:722px;width:226px;height:24px;justify-content:flex-start;text-align:left;padding-left:3px;padding-bottom:0px;background:#E5EFDB;font-size:14.25px;color:#333">Инженер</div>
<div class="cell" style="left:828px;top:722px;width:99px;height:24px;justify-content:center;text-align:center;padding-left:0px;padding-bottom:0px;background:#E5EFDB;font-size:14.25px;color:#333">25.10.2025</div>
<div class="cell" style="left:928px;top:722px;width:90px;height:24px;justify-content:flex-start;text-align:left;padding-left:3px;padding-bottom:0px;background:#E5EFDB;font-size:14.25px;color:#333">10</div>
<div class="cell" style="left:1019px;top:722px;width:49px;height:24px;justify-content:center;text-align:center;padding-left:0px;padding-bottom:0px;background:#E5EFDB;font-size:14.25px;color:#333">9</div>
<div class="cell" style="left:1069px;top:722px;width:49px;height:24px;justify-content:center;text-align:center;padding-left:0px;padding-bottom:0px;background:#E5EFDB;font-size:14.25px;color:#333">1</div>
<div class="cell" style="left:1119px;top:722px;width:109px;height:24px;justify-content:flex-start;text-align:left;padding-left:3px;padding-bottom:0px;background:#E5EFDB;font-size:14.25px;color:#333"></div>
<div class="cell" style="left:1229px;top:722px;width:235px;height:24px;justify-content:flex-start;text-align:left;padding-left:3px;padding-bottom:0px;background:#E5EFDB;font-size:14.25px;color:#333"></div>
<div class="t" style="left:13px;top:726.0px;font-size:16.5px;font-weight:700;color:#FF0000;line-height:1">x</div>
<div class="cell" style="left:27px;top:747px;width:45px;height:24px;justify-content:center;text-align:center;padding-left:0px;padding-bottom:0px;font-size:14.25px;color:#333">21</div>
<div class="cell" style="left:73px;top:747px;width:135px;height:24px;justify-content:flex-start;text-align:left;padding-left:3px;padding-bottom:0px;background:#E5EFDB;font-size:14.25px;color:#333">Кузьминых</div>
<div class="cell" style="left:209px;top:747px;width:136px;height:24px;justify-content:flex-start;text-align:left;padding-left:3px;padding-bottom:0px;background:#E5EFDB;font-size:14.25px;color:#333">Роман</div>
<div class="cell" style="left:346px;top:747px;width:135px;height:24px;justify-content:flex-start;text-align:left;padding-left:3px;padding-bottom:0px;background:#E5EFDB;font-size:14.25px;color:#333">Олегович</div>
<div class="cell" style="left:482px;top:747px;width:118px;height:24px;justify-content:flex-start;text-align:left;padding-left:3px;padding-bottom:0px;background:#E5EFDB;font-size:14.25px;color:#333"></div>
<div class="cell" style="left:601px;top:747px;width:226px;height:24px;justify-content:flex-start;text-align:left;padding-left:3px;padding-bottom:0px;background:#E5EFDB;font-size:14.25px;color:#333">Инженер</div>
<div class="cell" style="left:828px;top:747px;width:99px;height:24px;justify-content:center;text-align:center;padding-left:0px;padding-bottom:0px;background:#E5EFDB;font-size:14.25px;color:#333">25.10.2025</div>
<div class="cell" style="left:928px;top:747px;width:90px;height:24px;justify-content:flex-start;text-align:left;padding-left:3px;padding-bottom:0px;background:#E5EFDB;font-size:14.25px;color:#333">10</div>
<div class="cell" style="left:1019px;top:747px;width:49px;height:24px;justify-content:center;text-align:center;padding-left:0px;padding-bottom:0px;background:#E5EFDB;font-size:14.25px;color:#333">9</div>
<div class="cell" style="left:1069px;top:747px;width:49px;height:24px;justify-content:center;text-align:center;padding-left:0px;padding-bottom:0px;background:#E5EFDB;font-size:14.25px;color:#333">1</div>
<div class="cell" style="left:1119px;top:747px;width:109px;height:24px;justify-content:flex-start;text-align:left;padding-left:3px;padding-bottom:0px;background:#E5EFDB;font-size:14.25px;color:#333"></div>
<div class="cell" style="left:1229px;top:747px;width:235px;height:24px;justify-content:flex-start;text-align:left;padding-left:3px;padding-bottom:0px;background:#E5EFDB;font-size:14.25px;color:#333"></div>
<div class="t" style="left:13px;top:751.0px;font-size:16.5px;font-weight:700;color:#FF0000;line-height:1">x</div>
<div class="cell" style="left:27px;top:772px;width:45px;height:24px;justify-content:center;text-align:center;padding-left:0px;padding-bottom:0px;font-size:14.25px;color:#333">22</div>
<div class="cell" style="left:73px;top:772px;width:135px;height:24px;justify-content:flex-start;text-align:left;padding-left:3px;padding-bottom:0px;background:#E5EFDB;font-size:14.25px;color:#333">Климов</div>
<div class="cell" style="left:209px;top:772px;width:136px;height:24px;justify-content:flex-start;text-align:left;padding-left:3px;padding-bottom:0px;background:#E5EFDB;font-size:14.25px;color:#333">Иван</div>
<div class="cell" style="left:346px;top:772px;width:135px;height:24px;justify-content:flex-start;text-align:left;padding-left:3px;padding-bottom:0px;background:#E5EFDB;font-size:14.25px;color:#333">Сергеевич</div>
<div class="cell" style="left:482px;top:772px;width:118px;height:24px;justify-content:flex-start;text-align:left;padding-left:3px;padding-bottom:0px;background:#E5EFDB;font-size:14.25px;color:#333"></div>
<div class="cell" style="left:601px;top:772px;width:226px;height:24px;justify-content:flex-start;text-align:left;padding-left:3px;padding-bottom:0px;background:#E5EFDB;font-size:14.25px;color:#333">Инженер</div>
<div class="cell" style="left:828px;top:772px;width:99px;height:24px;justify-content:center;text-align:center;padding-left:0px;padding-bottom:0px;background:#E5EFDB;font-size:14.25px;color:#333">25.10.2025</div>
<div class="cell" style="left:928px;top:772px;width:90px;height:24px;justify-content:flex-start;text-align:left;padding-left:3px;padding-bottom:0px;background:#E5EFDB;font-size:14.25px;color:#333">10</div>
<div class="cell" style="left:1019px;top:772px;width:49px;height:24px;justify-content:center;text-align:center;padding-left:0px;padding-bottom:0px;background:#E5EFDB;font-size:14.25px;color:#333">9</div>
<div class="cell" style="left:1069px;top:772px;width:49px;height:24px;justify-content:center;text-align:center;padding-left:0px;padding-bottom:0px;background:#E5EFDB;font-size:14.25px;color:#333">1</div>
<div class="cell" style="left:1119px;top:772px;width:109px;height:24px;justify-content:flex-start;text-align:left;padding-left:3px;padding-bottom:0px;background:#E5EFDB;font-size:14.25px;color:#333"></div>
<div class="cell" style="left:1229px;top:772px;width:235px;height:24px;justify-content:flex-start;text-align:left;padding-left:3px;padding-bottom:0px;background:#E5EFDB;font-size:14.25px;color:#333"></div>
<div class="t" style="left:13px;top:776.0px;font-size:16.5px;font-weight:700;color:#FF0000;line-height:1">x</div>
<div class="cell" style="left:27px;top:797px;width:45px;height:34px;justify-content:center;text-align:center;padding-left:0px;padding-bottom:0px;font-size:14.25px;color:#333">23</div>
<div class="cell" style="left:73px;top:797px;width:135px;height:34px;justify-content:flex-start;text-align:left;padding-left:3px;padding-bottom:0px;background:#E5EFDB;font-size:14.25px;color:#333">Клюев</div>
<div class="cell" style="left:209px;top:797px;width:136px;height:34px;justify-content:flex-start;text-align:left;padding-left:3px;padding-bottom:0px;background:#E5EFDB;font-size:14.25px;color:#333">Антон</div>
<div class="cell" style="left:346px;top:797px;width:135px;height:34px;justify-content:flex-start;text-align:left;padding-left:3px;padding-bottom:0px;background:#E5EFDB;font-size:14.25px;color:#333">Сергеевич</div>
<div class="cell" style="left:482px;top:797px;width:118px;height:34px;justify-content:flex-start;text-align:left;padding-left:3px;padding-bottom:0px;background:#E5EFDB;font-size:14.25px;color:#333"></div>
<div class="cell" style="left:601px;top:797px;width:226px;height:34px;justify-content:flex-start;text-align:left;padding-left:3px;padding-bottom:0px;background:#E5EFDB;font-size:14.25px;color:#333">Электромонтажник по<br>аккумуляторным батареям</div>
<div class="cell" style="left:828px;top:797px;width:99px;height:34px;justify-content:center;text-align:center;padding-left:0px;padding-bottom:0px;background:#E5EFDB;font-size:14.25px;color:#333">25.10.2025</div>
<div class="cell" style="left:928px;top:797px;width:90px;height:34px;justify-content:flex-start;text-align:left;padding-left:3px;padding-bottom:0px;background:#E5EFDB;font-size:14.25px;color:#333">10</div>
<div class="cell" style="left:1019px;top:797px;width:49px;height:34px;justify-content:center;text-align:center;padding-left:0px;padding-bottom:0px;background:#E5EFDB;font-size:14.25px;color:#333">9</div>
<div class="cell" style="left:1069px;top:797px;width:49px;height:34px;justify-content:center;text-align:center;padding-left:0px;padding-bottom:0px;background:#E5EFDB;font-size:14.25px;color:#333">0</div>
<div class="cell" style="left:1119px;top:797px;width:109px;height:34px;justify-content:flex-start;text-align:left;padding-left:3px;padding-bottom:0px;background:#E5EFDB;font-size:14.25px;color:#333"></div>
<div class="cell" style="left:1229px;top:797px;width:235px;height:34px;justify-content:flex-start;text-align:left;padding-left:3px;padding-bottom:0px;background:#E5EFDB;font-size:14.25px;color:#333"></div>
<div class="t" style="left:13px;top:806.0px;font-size:16.5px;font-weight:700;color:#FF0000;line-height:1">x</div>
<div class="cell" style="left:27px;top:832px;width:45px;height:24px;justify-content:center;text-align:center;padding-left:0px;padding-bottom:0px;font-size:14.25px;color:#333">24</div>
<div class="cell" style="left:73px;top:832px;width:135px;height:24px;justify-content:flex-start;text-align:left;padding-left:3px;padding-bottom:0px;background:#E5EFDB;font-size:14.25px;color:#333">Артамонов</div>
<div class="cell" style="left:209px;top:832px;width:136px;height:24px;justify-content:flex-start;text-align:left;padding-left:3px;padding-bottom:0px;background:#E5EFDB;font-size:14.25px;color:#333">Дмитрий</div>
<div class="cell" style="left:346px;top:832px;width:135px;height:24px;justify-content:flex-start;text-align:left;padding-left:3px;padding-bottom:0px;background:#E5EFDB;font-size:14.25px;color:#333">Степанович</div>
<div class="cell" style="left:482px;top:832px;width:118px;height:24px;justify-content:flex-start;text-align:left;padding-left:3px;padding-bottom:0px;background:#E5EFDB;font-size:14.25px;color:#333"></div>
<div class="cell" style="left:601px;top:832px;width:226px;height:24px;justify-content:flex-start;text-align:left;padding-left:3px;padding-bottom:0px;background:#E5EFDB;font-size:14.25px;color:#333">Эксперт</div>
<div class="cell" style="left:828px;top:832px;width:99px;height:24px;justify-content:center;text-align:center;padding-left:0px;padding-bottom:0px;background:#E5EFDB;font-size:14.25px;color:#333">25.10.2025</div>
<div class="cell" style="left:928px;top:832px;width:90px;height:24px;justify-content:flex-start;text-align:left;padding-left:3px;padding-bottom:0px;background:#E5EFDB;font-size:14.25px;color:#333">10</div>
<div class="cell" style="left:1019px;top:832px;width:49px;height:24px;justify-content:center;text-align:center;padding-left:0px;padding-bottom:0px;background:#E5EFDB;font-size:14.25px;color:#333">9</div>
<div class="cell" style="left:1069px;top:832px;width:49px;height:24px;justify-content:center;text-align:center;padding-left:0px;padding-bottom:0px;background:#E5EFDB;font-size:14.25px;color:#333">1</div>
<div class="cell" style="left:1119px;top:832px;width:109px;height:24px;justify-content:flex-start;text-align:left;padding-left:3px;padding-bottom:0px;background:#E5EFDB;font-size:14.25px;color:#333"></div>
<div class="cell" style="left:1229px;top:832px;width:235px;height:24px;justify-content:flex-start;text-align:left;padding-left:3px;padding-bottom:0px;background:#E5EFDB;font-size:14.25px;color:#333"></div>
<div class="t" style="left:13px;top:836.0px;font-size:16.5px;font-weight:700;color:#FF0000;line-height:1">x</div>
<div class="hl" style="left:26px;top:33px;width:1px;height:824px"></div>
<div class="hl" style="left:72px;top:33px;width:1px;height:824px"></div>
<div class="hl" style="left:208px;top:80px;width:1px;height:777px"></div>
<div class="hl" style="left:345px;top:80px;width:1px;height:777px"></div>
<div class="hl" style="left:481px;top:80px;width:1px;height:777px"></div>
<div class="hl" style="left:600px;top:80px;width:1px;height:777px"></div>
<div class="hl" style="left:827px;top:33px;width:1px;height:824px"></div>
<div class="hl" style="left:927px;top:80px;width:1px;height:777px"></div>
<div class="hl" style="left:1018px;top:80px;width:1px;height:777px"></div>
<div class="hl" style="left:1068px;top:80px;width:1px;height:777px"></div>
<div class="hl" style="left:1118px;top:33px;width:1px;height:824px"></div>
<div class="hl" style="left:1228px;top:80px;width:1px;height:777px"></div>
<div class="hl" style="left:1464px;top:33px;width:1px;height:824px"></div>
<div class="hl" style="left:26px;top:33px;width:1439px;height:1px"></div>
<div class="hl" style="left:72px;top:80px;width:1393px;height:1px"></div>
<div class="hl" style="left:26px;top:200px;width:1439px;height:1px"></div>
<div class="hl" style="left:26px;top:235px;width:1439px;height:1px"></div>
<div class="hl" style="left:26px;top:260px;width:1439px;height:1px"></div>
<div class="hl" style="left:26px;top:285px;width:1439px;height:1px"></div>
<div class="hl" style="left:26px;top:310px;width:1439px;height:1px"></div>
<div class="hl" style="left:26px;top:335px;width:1439px;height:1px"></div>
<div class="hl" style="left:26px;top:360px;width:1439px;height:1px"></div>
<div class="hl" style="left:26px;top:385px;width:1439px;height:1px"></div>
<div class="hl" style="left:26px;top:410px;width:1439px;height:1px"></div>
<div class="hl" style="left:26px;top:435px;width:1439px;height:1px"></div>
<div class="hl" style="left:26px;top:460px;width:1439px;height:1px"></div>
<div class="hl" style="left:26px;top:485px;width:1439px;height:1px"></div>
<div class="hl" style="left:26px;top:510px;width:1439px;height:1px"></div>
<div class="hl" style="left:26px;top:535px;width:1439px;height:1px"></div>
<div class="hl" style="left:26px;top:560px;width:1439px;height:1px"></div>
<div class="hl" style="left:26px;top:611px;width:1439px;height:1px"></div>
<div class="hl" style="left:26px;top:646px;width:1439px;height:1px"></div>
<div class="hl" style="left:26px;top:671px;width:1439px;height:1px"></div>
<div class="hl" style="left:26px;top:696px;width:1439px;height:1px"></div>
<div class="hl" style="left:26px;top:721px;width:1439px;height:1px"></div>
<div class="hl" style="left:26px;top:746px;width:1439px;height:1px"></div>
<div class="hl" style="left:26px;top:771px;width:1439px;height:1px"></div>
<div class="hl" style="left:26px;top:796px;width:1439px;height:1px"></div>
<div class="hl" style="left:26px;top:831px;width:1439px;height:1px"></div>
<div class="hl" style="left:26px;top:856px;width:1439px;height:1px"></div>
</div>
<svg style="position:absolute;left:1480px;top:860px" width="410" height="170" viewBox="1480 860 410 170">
<path d="M1580.5 877.5 H1861 Q1876.5 877.5 1876.5 893 V1002 Q1876.5 1017.5 1861 1017.5 H1580 Q1564.5 1017.5 1564.5 1002 V924.5 L1491.3 869.3 L1564.5 909 V893 Q1564.5 877.5 1580.5 877.5Z" fill="#fff" stroke="#D7202B" stroke-width="2" stroke-linejoin="miter"/></svg>
<div class="t" style="left:1574px;top:894px;font-family:'Liberation Serif',serif;font-weight:700;font-size:24px;line-height:26px;color:#000;white-space:pre">Результат проверки:

1 - удовлетворительно
0 - неудовлетворительно</div>
<div class="t" style="left:198px;top:1045px;font-size:16.35px;color:#4D4D4D;font-weight:400;">Комментарий:</div>
<div style="position:absolute;left:313px;top:1038px;width:1588px;height:29px;box-sizing:border-box;border:1px solid #B3B3B3;border-radius:3px;background:#fff;"></div>
<div style="position:absolute;left:0px;top:1078px;width:1920px;height:2px;background:#3C3C3C;"></div>
<div style="position:absolute;left:540px;top:1078px;width:43px;height:2px;background:#777;"></div>
</body></html>
